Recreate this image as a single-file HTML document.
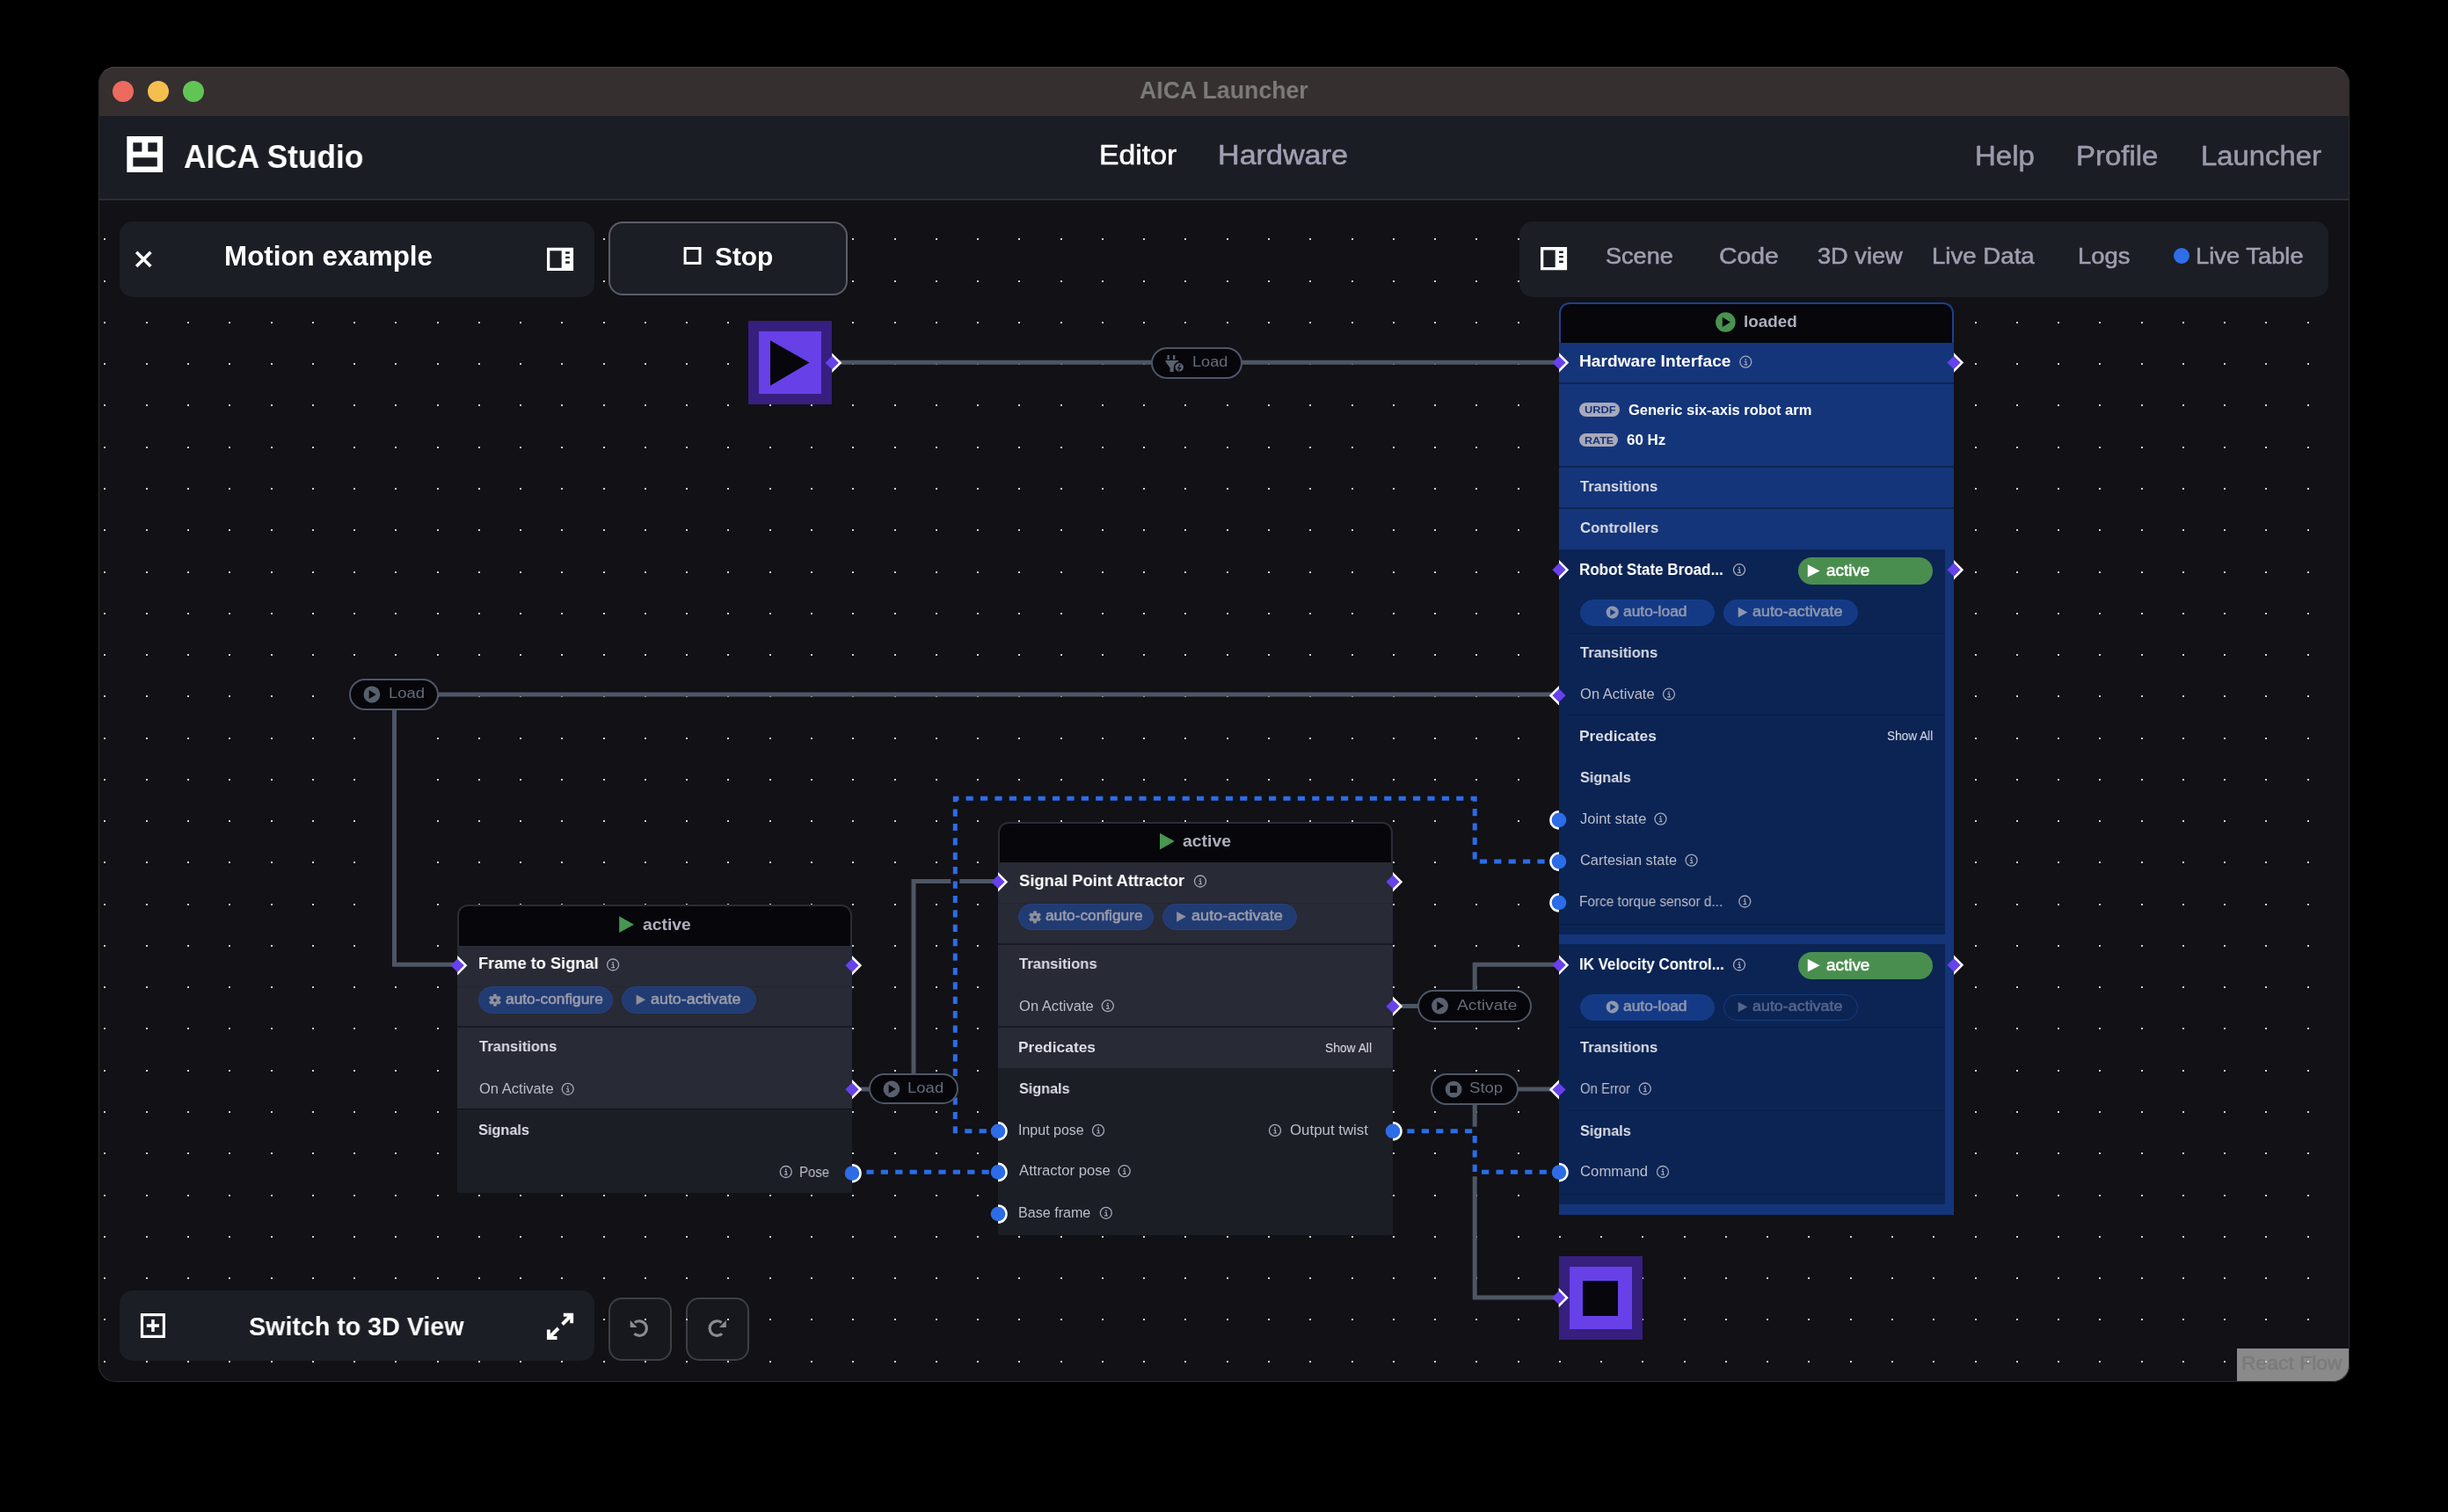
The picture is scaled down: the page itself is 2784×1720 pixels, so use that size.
<!DOCTYPE html>
<html><head><meta charset="utf-8"><style>
html,body{margin:0;padding:0;background:#000;width:2784px;height:1720px;overflow:hidden}
.a{position:absolute}
.t{position:absolute;white-space:nowrap;line-height:1;font-family:"Liberation Sans",sans-serif;transform-origin:0 0;will-change:transform}
svg.a{overflow:visible}
</style></head><body>
<div class="a" style="left:112px;top:76px;width:2560px;height:1496px;border-radius:19px;overflow:hidden;background:#111116;">
<div class="a" style="left:0;top:0;width:2560px;height:56px;background:#352f2f;border-top:1px solid #4a4444;box-sizing:border-box"></div>
<div class="a" style="left:0;top:56px;width:2560px;height:96px;background:#1b1d24;border-bottom:2px solid #2b2e37;box-sizing:border-box"></div>
</div>
<div class="a" style="left:128px;top:92px;width:24px;height:24px;border-radius:50%;background:#ed6a5e"></div>
<div class="a" style="left:168px;top:92px;width:24px;height:24px;border-radius:50%;background:#f4bf4f"></div>
<div class="a" style="left:208px;top:92px;width:24px;height:24px;border-radius:50%;background:#61c554"></div>
<div class="t" id="t0" style="left:1295.76px;top:88.00px;font-size:28.41px;font-weight:700;color:#7c7a7a;transform:scaleX(0.9389);">AICA Launcher</div>
<svg class="a" style="left:0;top:0" width="2784" height="1720" viewBox="0 0 2784 1720"><path fill="#fff" fill-rule="evenodd" d="M144.3 155.1H185.1V196H144.3Z M151.3 162.3V172.4H161.4V162.3Z M168.3 162.3V172.4H178.8V162.3Z M151.3 179.2V189.6H178.8V179.2Z"/></svg>
<div class="t" id="t1" style="left:209.44px;top:161.00px;font-size:36.81px;font-weight:700;color:#fff;transform:scaleX(0.9583);">AICA Studio</div>
<div class="t" id="t2" style="left:1250.10px;top:162.00px;font-size:30.72px;font-weight:400;color:#fff;transform:scaleX(1.0987);-webkit-text-stroke:0.55px #fff;">Editor</div>
<div class="t" id="t3" style="left:1385.38px;top:162.00px;font-size:30.72px;font-weight:400;color:#a09fb3;transform:scaleX(1.1108);-webkit-text-stroke:0.55px #a09fb3;">Hardware</div>
<div class="t" id="t4" style="left:2245.57px;top:162.00px;font-size:31.01px;font-weight:400;color:#9b9aac;transform:scaleX(1.0639);-webkit-text-stroke:0.55px #9b9aac;">Help</div>
<div class="t" id="t5" style="left:2361.47px;top:162.00px;font-size:31.01px;font-weight:400;color:#9b9aac;transform:scaleX(1.0635);-webkit-text-stroke:0.55px #9b9aac;">Profile</div>
<div class="t" id="t6" style="left:2502.78px;top:162.00px;font-size:31.01px;font-weight:400;color:#9b9aac;transform:scaleX(1.0591);-webkit-text-stroke:0.55px #9b9aac;">Launcher</div>
<div class="a" style="left:692px;top:1476px;width:71.5px;height:71.5px;box-sizing:border-box;border:2px solid #3d3e48;border-radius:15px;background:#17181e"></div>
<div class="a" style="left:780.2px;top:1476px;width:71.5px;height:71.5px;box-sizing:border-box;border:2px solid #3d3e48;border-radius:15px;background:#17181e"></div>
<div class="a" style="left:2544px;top:1534px;width:128px;height:38px;background:#8a8a8a;border-bottom-right-radius:19px"></div>
<div class="t" id="t7" style="left:2549.23px;top:1541.00px;font-size:21.45px;font-weight:400;color:#7b7b7b;transform:scaleX(1.0692);-webkit-text-stroke:0.55px #7b7b7b;">React Flow</div>
<svg class="a" style="left:0;top:0" width="2784" height="1720" shape-rendering="crispEdges"><path fill="#d0d0d0" d="M118 271h2v2h-2zM166 271h2v2h-2zM213 271h2v2h-2zM260 271h2v2h-2zM308 271h2v2h-2zM355 271h2v2h-2zM402 271h2v2h-2zM449 271h2v2h-2zM497 271h2v2h-2zM544 271h2v2h-2zM591 271h2v2h-2zM638 271h2v2h-2zM686 271h2v2h-2zM733 271h2v2h-2zM780 271h2v2h-2zM827 271h2v2h-2zM875 271h2v2h-2zM922 271h2v2h-2zM969 271h2v2h-2zM1017 271h2v2h-2zM1064 271h2v2h-2zM1111 271h2v2h-2zM1158 271h2v2h-2zM1206 271h2v2h-2zM1253 271h2v2h-2zM1300 271h2v2h-2zM1347 271h2v2h-2zM1395 271h2v2h-2zM1442 271h2v2h-2zM1489 271h2v2h-2zM1537 271h2v2h-2zM1584 271h2v2h-2zM1631 271h2v2h-2zM1678 271h2v2h-2zM1726 271h2v2h-2zM1773 271h2v2h-2zM1820 271h2v2h-2zM1867 271h2v2h-2zM1915 271h2v2h-2zM1962 271h2v2h-2zM2009 271h2v2h-2zM2056 271h2v2h-2zM2104 271h2v2h-2zM2151 271h2v2h-2zM2198 271h2v2h-2zM2246 271h2v2h-2zM2293 271h2v2h-2zM2340 271h2v2h-2zM2387 271h2v2h-2zM2435 271h2v2h-2zM2482 271h2v2h-2zM2529 271h2v2h-2zM2576 271h2v2h-2zM2624 271h2v2h-2zM2671 271h1v2h-1zM118 319h2v2h-2zM166 319h2v2h-2zM213 319h2v2h-2zM260 319h2v2h-2zM308 319h2v2h-2zM355 319h2v2h-2zM402 319h2v2h-2zM449 319h2v2h-2zM497 319h2v2h-2zM544 319h2v2h-2zM591 319h2v2h-2zM638 319h2v2h-2zM686 319h2v2h-2zM733 319h2v2h-2zM780 319h2v2h-2zM827 319h2v2h-2zM875 319h2v2h-2zM922 319h2v2h-2zM969 319h2v2h-2zM1017 319h2v2h-2zM1064 319h2v2h-2zM1111 319h2v2h-2zM1158 319h2v2h-2zM1206 319h2v2h-2zM1253 319h2v2h-2zM1300 319h2v2h-2zM1347 319h2v2h-2zM1395 319h2v2h-2zM1442 319h2v2h-2zM1489 319h2v2h-2zM1537 319h2v2h-2zM1584 319h2v2h-2zM1631 319h2v2h-2zM1678 319h2v2h-2zM1726 319h2v2h-2zM1773 319h2v2h-2zM1820 319h2v2h-2zM1867 319h2v2h-2zM1915 319h2v2h-2zM1962 319h2v2h-2zM2009 319h2v2h-2zM2056 319h2v2h-2zM2104 319h2v2h-2zM2151 319h2v2h-2zM2198 319h2v2h-2zM2246 319h2v2h-2zM2293 319h2v2h-2zM2340 319h2v2h-2zM2387 319h2v2h-2zM2435 319h2v2h-2zM2482 319h2v2h-2zM2529 319h2v2h-2zM2576 319h2v2h-2zM2624 319h2v2h-2zM2671 319h1v2h-1zM118 366h2v2h-2zM166 366h2v2h-2zM213 366h2v2h-2zM260 366h2v2h-2zM308 366h2v2h-2zM355 366h2v2h-2zM402 366h2v2h-2zM449 366h2v2h-2zM497 366h2v2h-2zM544 366h2v2h-2zM591 366h2v2h-2zM638 366h2v2h-2zM686 366h2v2h-2zM733 366h2v2h-2zM780 366h2v2h-2zM827 366h2v2h-2zM875 366h2v2h-2zM922 366h2v2h-2zM969 366h2v2h-2zM1017 366h2v2h-2zM1064 366h2v2h-2zM1111 366h2v2h-2zM1158 366h2v2h-2zM1206 366h2v2h-2zM1253 366h2v2h-2zM1300 366h2v2h-2zM1347 366h2v2h-2zM1395 366h2v2h-2zM1442 366h2v2h-2zM1489 366h2v2h-2zM1537 366h2v2h-2zM1584 366h2v2h-2zM1631 366h2v2h-2zM1678 366h2v2h-2zM1726 366h2v2h-2zM1773 366h2v2h-2zM1820 366h2v2h-2zM1867 366h2v2h-2zM1915 366h2v2h-2zM1962 366h2v2h-2zM2009 366h2v2h-2zM2056 366h2v2h-2zM2104 366h2v2h-2zM2151 366h2v2h-2zM2198 366h2v2h-2zM2246 366h2v2h-2zM2293 366h2v2h-2zM2340 366h2v2h-2zM2387 366h2v2h-2zM2435 366h2v2h-2zM2482 366h2v2h-2zM2529 366h2v2h-2zM2576 366h2v2h-2zM2624 366h2v2h-2zM2671 366h1v2h-1zM118 413h2v2h-2zM166 413h2v2h-2zM213 413h2v2h-2zM260 413h2v2h-2zM308 413h2v2h-2zM355 413h2v2h-2zM402 413h2v2h-2zM449 413h2v2h-2zM497 413h2v2h-2zM544 413h2v2h-2zM591 413h2v2h-2zM638 413h2v2h-2zM686 413h2v2h-2zM733 413h2v2h-2zM780 413h2v2h-2zM827 413h2v2h-2zM875 413h2v2h-2zM922 413h2v2h-2zM969 413h2v2h-2zM1017 413h2v2h-2zM1064 413h2v2h-2zM1111 413h2v2h-2zM1158 413h2v2h-2zM1206 413h2v2h-2zM1253 413h2v2h-2zM1300 413h2v2h-2zM1347 413h2v2h-2zM1395 413h2v2h-2zM1442 413h2v2h-2zM1489 413h2v2h-2zM1537 413h2v2h-2zM1584 413h2v2h-2zM1631 413h2v2h-2zM1678 413h2v2h-2zM1726 413h2v2h-2zM1773 413h2v2h-2zM1820 413h2v2h-2zM1867 413h2v2h-2zM1915 413h2v2h-2zM1962 413h2v2h-2zM2009 413h2v2h-2zM2056 413h2v2h-2zM2104 413h2v2h-2zM2151 413h2v2h-2zM2198 413h2v2h-2zM2246 413h2v2h-2zM2293 413h2v2h-2zM2340 413h2v2h-2zM2387 413h2v2h-2zM2435 413h2v2h-2zM2482 413h2v2h-2zM2529 413h2v2h-2zM2576 413h2v2h-2zM2624 413h2v2h-2zM2671 413h1v2h-1zM118 460h2v2h-2zM166 460h2v2h-2zM213 460h2v2h-2zM260 460h2v2h-2zM308 460h2v2h-2zM355 460h2v2h-2zM402 460h2v2h-2zM449 460h2v2h-2zM497 460h2v2h-2zM544 460h2v2h-2zM591 460h2v2h-2zM638 460h2v2h-2zM686 460h2v2h-2zM733 460h2v2h-2zM780 460h2v2h-2zM827 460h2v2h-2zM875 460h2v2h-2zM922 460h2v2h-2zM969 460h2v2h-2zM1017 460h2v2h-2zM1064 460h2v2h-2zM1111 460h2v2h-2zM1158 460h2v2h-2zM1206 460h2v2h-2zM1253 460h2v2h-2zM1300 460h2v2h-2zM1347 460h2v2h-2zM1395 460h2v2h-2zM1442 460h2v2h-2zM1489 460h2v2h-2zM1537 460h2v2h-2zM1584 460h2v2h-2zM1631 460h2v2h-2zM1678 460h2v2h-2zM1726 460h2v2h-2zM1773 460h2v2h-2zM1820 460h2v2h-2zM1867 460h2v2h-2zM1915 460h2v2h-2zM1962 460h2v2h-2zM2009 460h2v2h-2zM2056 460h2v2h-2zM2104 460h2v2h-2zM2151 460h2v2h-2zM2198 460h2v2h-2zM2246 460h2v2h-2zM2293 460h2v2h-2zM2340 460h2v2h-2zM2387 460h2v2h-2zM2435 460h2v2h-2zM2482 460h2v2h-2zM2529 460h2v2h-2zM2576 460h2v2h-2zM2624 460h2v2h-2zM2671 460h1v2h-1zM118 508h2v2h-2zM166 508h2v2h-2zM213 508h2v2h-2zM260 508h2v2h-2zM308 508h2v2h-2zM355 508h2v2h-2zM402 508h2v2h-2zM449 508h2v2h-2zM497 508h2v2h-2zM544 508h2v2h-2zM591 508h2v2h-2zM638 508h2v2h-2zM686 508h2v2h-2zM733 508h2v2h-2zM780 508h2v2h-2zM827 508h2v2h-2zM875 508h2v2h-2zM922 508h2v2h-2zM969 508h2v2h-2zM1017 508h2v2h-2zM1064 508h2v2h-2zM1111 508h2v2h-2zM1158 508h2v2h-2zM1206 508h2v2h-2zM1253 508h2v2h-2zM1300 508h2v2h-2zM1347 508h2v2h-2zM1395 508h2v2h-2zM1442 508h2v2h-2zM1489 508h2v2h-2zM1537 508h2v2h-2zM1584 508h2v2h-2zM1631 508h2v2h-2zM1678 508h2v2h-2zM1726 508h2v2h-2zM1773 508h2v2h-2zM1820 508h2v2h-2zM1867 508h2v2h-2zM1915 508h2v2h-2zM1962 508h2v2h-2zM2009 508h2v2h-2zM2056 508h2v2h-2zM2104 508h2v2h-2zM2151 508h2v2h-2zM2198 508h2v2h-2zM2246 508h2v2h-2zM2293 508h2v2h-2zM2340 508h2v2h-2zM2387 508h2v2h-2zM2435 508h2v2h-2zM2482 508h2v2h-2zM2529 508h2v2h-2zM2576 508h2v2h-2zM2624 508h2v2h-2zM2671 508h1v2h-1zM118 555h2v2h-2zM166 555h2v2h-2zM213 555h2v2h-2zM260 555h2v2h-2zM308 555h2v2h-2zM355 555h2v2h-2zM402 555h2v2h-2zM449 555h2v2h-2zM497 555h2v2h-2zM544 555h2v2h-2zM591 555h2v2h-2zM638 555h2v2h-2zM686 555h2v2h-2zM733 555h2v2h-2zM780 555h2v2h-2zM827 555h2v2h-2zM875 555h2v2h-2zM922 555h2v2h-2zM969 555h2v2h-2zM1017 555h2v2h-2zM1064 555h2v2h-2zM1111 555h2v2h-2zM1158 555h2v2h-2zM1206 555h2v2h-2zM1253 555h2v2h-2zM1300 555h2v2h-2zM1347 555h2v2h-2zM1395 555h2v2h-2zM1442 555h2v2h-2zM1489 555h2v2h-2zM1537 555h2v2h-2zM1584 555h2v2h-2zM1631 555h2v2h-2zM1678 555h2v2h-2zM1726 555h2v2h-2zM1773 555h2v2h-2zM1820 555h2v2h-2zM1867 555h2v2h-2zM1915 555h2v2h-2zM1962 555h2v2h-2zM2009 555h2v2h-2zM2056 555h2v2h-2zM2104 555h2v2h-2zM2151 555h2v2h-2zM2198 555h2v2h-2zM2246 555h2v2h-2zM2293 555h2v2h-2zM2340 555h2v2h-2zM2387 555h2v2h-2zM2435 555h2v2h-2zM2482 555h2v2h-2zM2529 555h2v2h-2zM2576 555h2v2h-2zM2624 555h2v2h-2zM2671 555h1v2h-1zM118 602h2v2h-2zM166 602h2v2h-2zM213 602h2v2h-2zM260 602h2v2h-2zM308 602h2v2h-2zM355 602h2v2h-2zM402 602h2v2h-2zM449 602h2v2h-2zM497 602h2v2h-2zM544 602h2v2h-2zM591 602h2v2h-2zM638 602h2v2h-2zM686 602h2v2h-2zM733 602h2v2h-2zM780 602h2v2h-2zM827 602h2v2h-2zM875 602h2v2h-2zM922 602h2v2h-2zM969 602h2v2h-2zM1017 602h2v2h-2zM1064 602h2v2h-2zM1111 602h2v2h-2zM1158 602h2v2h-2zM1206 602h2v2h-2zM1253 602h2v2h-2zM1300 602h2v2h-2zM1347 602h2v2h-2zM1395 602h2v2h-2zM1442 602h2v2h-2zM1489 602h2v2h-2zM1537 602h2v2h-2zM1584 602h2v2h-2zM1631 602h2v2h-2zM1678 602h2v2h-2zM1726 602h2v2h-2zM1773 602h2v2h-2zM1820 602h2v2h-2zM1867 602h2v2h-2zM1915 602h2v2h-2zM1962 602h2v2h-2zM2009 602h2v2h-2zM2056 602h2v2h-2zM2104 602h2v2h-2zM2151 602h2v2h-2zM2198 602h2v2h-2zM2246 602h2v2h-2zM2293 602h2v2h-2zM2340 602h2v2h-2zM2387 602h2v2h-2zM2435 602h2v2h-2zM2482 602h2v2h-2zM2529 602h2v2h-2zM2576 602h2v2h-2zM2624 602h2v2h-2zM2671 602h1v2h-1zM118 650h2v2h-2zM166 650h2v2h-2zM213 650h2v2h-2zM260 650h2v2h-2zM308 650h2v2h-2zM355 650h2v2h-2zM402 650h2v2h-2zM449 650h2v2h-2zM497 650h2v2h-2zM544 650h2v2h-2zM591 650h2v2h-2zM638 650h2v2h-2zM686 650h2v2h-2zM733 650h2v2h-2zM780 650h2v2h-2zM827 650h2v2h-2zM875 650h2v2h-2zM922 650h2v2h-2zM969 650h2v2h-2zM1017 650h2v2h-2zM1064 650h2v2h-2zM1111 650h2v2h-2zM1158 650h2v2h-2zM1206 650h2v2h-2zM1253 650h2v2h-2zM1300 650h2v2h-2zM1347 650h2v2h-2zM1395 650h2v2h-2zM1442 650h2v2h-2zM1489 650h2v2h-2zM1537 650h2v2h-2zM1584 650h2v2h-2zM1631 650h2v2h-2zM1678 650h2v2h-2zM1726 650h2v2h-2zM1773 650h2v2h-2zM1820 650h2v2h-2zM1867 650h2v2h-2zM1915 650h2v2h-2zM1962 650h2v2h-2zM2009 650h2v2h-2zM2056 650h2v2h-2zM2104 650h2v2h-2zM2151 650h2v2h-2zM2198 650h2v2h-2zM2246 650h2v2h-2zM2293 650h2v2h-2zM2340 650h2v2h-2zM2387 650h2v2h-2zM2435 650h2v2h-2zM2482 650h2v2h-2zM2529 650h2v2h-2zM2576 650h2v2h-2zM2624 650h2v2h-2zM2671 650h1v2h-1zM118 697h2v2h-2zM166 697h2v2h-2zM213 697h2v2h-2zM260 697h2v2h-2zM308 697h2v2h-2zM355 697h2v2h-2zM402 697h2v2h-2zM449 697h2v2h-2zM497 697h2v2h-2zM544 697h2v2h-2zM591 697h2v2h-2zM638 697h2v2h-2zM686 697h2v2h-2zM733 697h2v2h-2zM780 697h2v2h-2zM827 697h2v2h-2zM875 697h2v2h-2zM922 697h2v2h-2zM969 697h2v2h-2zM1017 697h2v2h-2zM1064 697h2v2h-2zM1111 697h2v2h-2zM1158 697h2v2h-2zM1206 697h2v2h-2zM1253 697h2v2h-2zM1300 697h2v2h-2zM1347 697h2v2h-2zM1395 697h2v2h-2zM1442 697h2v2h-2zM1489 697h2v2h-2zM1537 697h2v2h-2zM1584 697h2v2h-2zM1631 697h2v2h-2zM1678 697h2v2h-2zM1726 697h2v2h-2zM1773 697h2v2h-2zM1820 697h2v2h-2zM1867 697h2v2h-2zM1915 697h2v2h-2zM1962 697h2v2h-2zM2009 697h2v2h-2zM2056 697h2v2h-2zM2104 697h2v2h-2zM2151 697h2v2h-2zM2198 697h2v2h-2zM2246 697h2v2h-2zM2293 697h2v2h-2zM2340 697h2v2h-2zM2387 697h2v2h-2zM2435 697h2v2h-2zM2482 697h2v2h-2zM2529 697h2v2h-2zM2576 697h2v2h-2zM2624 697h2v2h-2zM2671 697h1v2h-1zM118 744h2v2h-2zM166 744h2v2h-2zM213 744h2v2h-2zM260 744h2v2h-2zM308 744h2v2h-2zM355 744h2v2h-2zM402 744h2v2h-2zM449 744h2v2h-2zM497 744h2v2h-2zM544 744h2v2h-2zM591 744h2v2h-2zM638 744h2v2h-2zM686 744h2v2h-2zM733 744h2v2h-2zM780 744h2v2h-2zM827 744h2v2h-2zM875 744h2v2h-2zM922 744h2v2h-2zM969 744h2v2h-2zM1017 744h2v2h-2zM1064 744h2v2h-2zM1111 744h2v2h-2zM1158 744h2v2h-2zM1206 744h2v2h-2zM1253 744h2v2h-2zM1300 744h2v2h-2zM1347 744h2v2h-2zM1395 744h2v2h-2zM1442 744h2v2h-2zM1489 744h2v2h-2zM1537 744h2v2h-2zM1584 744h2v2h-2zM1631 744h2v2h-2zM1678 744h2v2h-2zM1726 744h2v2h-2zM1773 744h2v2h-2zM1820 744h2v2h-2zM1867 744h2v2h-2zM1915 744h2v2h-2zM1962 744h2v2h-2zM2009 744h2v2h-2zM2056 744h2v2h-2zM2104 744h2v2h-2zM2151 744h2v2h-2zM2198 744h2v2h-2zM2246 744h2v2h-2zM2293 744h2v2h-2zM2340 744h2v2h-2zM2387 744h2v2h-2zM2435 744h2v2h-2zM2482 744h2v2h-2zM2529 744h2v2h-2zM2576 744h2v2h-2zM2624 744h2v2h-2zM2671 744h1v2h-1zM118 791h2v2h-2zM166 791h2v2h-2zM213 791h2v2h-2zM260 791h2v2h-2zM308 791h2v2h-2zM355 791h2v2h-2zM402 791h2v2h-2zM449 791h2v2h-2zM497 791h2v2h-2zM544 791h2v2h-2zM591 791h2v2h-2zM638 791h2v2h-2zM686 791h2v2h-2zM733 791h2v2h-2zM780 791h2v2h-2zM827 791h2v2h-2zM875 791h2v2h-2zM922 791h2v2h-2zM969 791h2v2h-2zM1017 791h2v2h-2zM1064 791h2v2h-2zM1111 791h2v2h-2zM1158 791h2v2h-2zM1206 791h2v2h-2zM1253 791h2v2h-2zM1300 791h2v2h-2zM1347 791h2v2h-2zM1395 791h2v2h-2zM1442 791h2v2h-2zM1489 791h2v2h-2zM1537 791h2v2h-2zM1584 791h2v2h-2zM1631 791h2v2h-2zM1678 791h2v2h-2zM1726 791h2v2h-2zM1773 791h2v2h-2zM1820 791h2v2h-2zM1867 791h2v2h-2zM1915 791h2v2h-2zM1962 791h2v2h-2zM2009 791h2v2h-2zM2056 791h2v2h-2zM2104 791h2v2h-2zM2151 791h2v2h-2zM2198 791h2v2h-2zM2246 791h2v2h-2zM2293 791h2v2h-2zM2340 791h2v2h-2zM2387 791h2v2h-2zM2435 791h2v2h-2zM2482 791h2v2h-2zM2529 791h2v2h-2zM2576 791h2v2h-2zM2624 791h2v2h-2zM2671 791h1v2h-1zM118 839h2v2h-2zM166 839h2v2h-2zM213 839h2v2h-2zM260 839h2v2h-2zM308 839h2v2h-2zM355 839h2v2h-2zM402 839h2v2h-2zM449 839h2v2h-2zM497 839h2v2h-2zM544 839h2v2h-2zM591 839h2v2h-2zM638 839h2v2h-2zM686 839h2v2h-2zM733 839h2v2h-2zM780 839h2v2h-2zM827 839h2v2h-2zM875 839h2v2h-2zM922 839h2v2h-2zM969 839h2v2h-2zM1017 839h2v2h-2zM1064 839h2v2h-2zM1111 839h2v2h-2zM1158 839h2v2h-2zM1206 839h2v2h-2zM1253 839h2v2h-2zM1300 839h2v2h-2zM1347 839h2v2h-2zM1395 839h2v2h-2zM1442 839h2v2h-2zM1489 839h2v2h-2zM1537 839h2v2h-2zM1584 839h2v2h-2zM1631 839h2v2h-2zM1678 839h2v2h-2zM1726 839h2v2h-2zM1773 839h2v2h-2zM1820 839h2v2h-2zM1867 839h2v2h-2zM1915 839h2v2h-2zM1962 839h2v2h-2zM2009 839h2v2h-2zM2056 839h2v2h-2zM2104 839h2v2h-2zM2151 839h2v2h-2zM2198 839h2v2h-2zM2246 839h2v2h-2zM2293 839h2v2h-2zM2340 839h2v2h-2zM2387 839h2v2h-2zM2435 839h2v2h-2zM2482 839h2v2h-2zM2529 839h2v2h-2zM2576 839h2v2h-2zM2624 839h2v2h-2zM2671 839h1v2h-1zM118 886h2v2h-2zM166 886h2v2h-2zM213 886h2v2h-2zM260 886h2v2h-2zM308 886h2v2h-2zM355 886h2v2h-2zM402 886h2v2h-2zM449 886h2v2h-2zM497 886h2v2h-2zM544 886h2v2h-2zM591 886h2v2h-2zM638 886h2v2h-2zM686 886h2v2h-2zM733 886h2v2h-2zM780 886h2v2h-2zM827 886h2v2h-2zM875 886h2v2h-2zM922 886h2v2h-2zM969 886h2v2h-2zM1017 886h2v2h-2zM1064 886h2v2h-2zM1111 886h2v2h-2zM1158 886h2v2h-2zM1206 886h2v2h-2zM1253 886h2v2h-2zM1300 886h2v2h-2zM1347 886h2v2h-2zM1395 886h2v2h-2zM1442 886h2v2h-2zM1489 886h2v2h-2zM1537 886h2v2h-2zM1584 886h2v2h-2zM1631 886h2v2h-2zM1678 886h2v2h-2zM1726 886h2v2h-2zM1773 886h2v2h-2zM1820 886h2v2h-2zM1867 886h2v2h-2zM1915 886h2v2h-2zM1962 886h2v2h-2zM2009 886h2v2h-2zM2056 886h2v2h-2zM2104 886h2v2h-2zM2151 886h2v2h-2zM2198 886h2v2h-2zM2246 886h2v2h-2zM2293 886h2v2h-2zM2340 886h2v2h-2zM2387 886h2v2h-2zM2435 886h2v2h-2zM2482 886h2v2h-2zM2529 886h2v2h-2zM2576 886h2v2h-2zM2624 886h2v2h-2zM2671 886h1v2h-1zM118 933h2v2h-2zM166 933h2v2h-2zM213 933h2v2h-2zM260 933h2v2h-2zM308 933h2v2h-2zM355 933h2v2h-2zM402 933h2v2h-2zM449 933h2v2h-2zM497 933h2v2h-2zM544 933h2v2h-2zM591 933h2v2h-2zM638 933h2v2h-2zM686 933h2v2h-2zM733 933h2v2h-2zM780 933h2v2h-2zM827 933h2v2h-2zM875 933h2v2h-2zM922 933h2v2h-2zM969 933h2v2h-2zM1017 933h2v2h-2zM1064 933h2v2h-2zM1111 933h2v2h-2zM1158 933h2v2h-2zM1206 933h2v2h-2zM1253 933h2v2h-2zM1300 933h2v2h-2zM1347 933h2v2h-2zM1395 933h2v2h-2zM1442 933h2v2h-2zM1489 933h2v2h-2zM1537 933h2v2h-2zM1584 933h2v2h-2zM1631 933h2v2h-2zM1678 933h2v2h-2zM1726 933h2v2h-2zM1773 933h2v2h-2zM1820 933h2v2h-2zM1867 933h2v2h-2zM1915 933h2v2h-2zM1962 933h2v2h-2zM2009 933h2v2h-2zM2056 933h2v2h-2zM2104 933h2v2h-2zM2151 933h2v2h-2zM2198 933h2v2h-2zM2246 933h2v2h-2zM2293 933h2v2h-2zM2340 933h2v2h-2zM2387 933h2v2h-2zM2435 933h2v2h-2zM2482 933h2v2h-2zM2529 933h2v2h-2zM2576 933h2v2h-2zM2624 933h2v2h-2zM2671 933h1v2h-1zM118 980h2v2h-2zM166 980h2v2h-2zM213 980h2v2h-2zM260 980h2v2h-2zM308 980h2v2h-2zM355 980h2v2h-2zM402 980h2v2h-2zM449 980h2v2h-2zM497 980h2v2h-2zM544 980h2v2h-2zM591 980h2v2h-2zM638 980h2v2h-2zM686 980h2v2h-2zM733 980h2v2h-2zM780 980h2v2h-2zM827 980h2v2h-2zM875 980h2v2h-2zM922 980h2v2h-2zM969 980h2v2h-2zM1017 980h2v2h-2zM1064 980h2v2h-2zM1111 980h2v2h-2zM1158 980h2v2h-2zM1206 980h2v2h-2zM1253 980h2v2h-2zM1300 980h2v2h-2zM1347 980h2v2h-2zM1395 980h2v2h-2zM1442 980h2v2h-2zM1489 980h2v2h-2zM1537 980h2v2h-2zM1584 980h2v2h-2zM1631 980h2v2h-2zM1678 980h2v2h-2zM1726 980h2v2h-2zM1773 980h2v2h-2zM1820 980h2v2h-2zM1867 980h2v2h-2zM1915 980h2v2h-2zM1962 980h2v2h-2zM2009 980h2v2h-2zM2056 980h2v2h-2zM2104 980h2v2h-2zM2151 980h2v2h-2zM2198 980h2v2h-2zM2246 980h2v2h-2zM2293 980h2v2h-2zM2340 980h2v2h-2zM2387 980h2v2h-2zM2435 980h2v2h-2zM2482 980h2v2h-2zM2529 980h2v2h-2zM2576 980h2v2h-2zM2624 980h2v2h-2zM2671 980h1v2h-1zM118 1028h2v2h-2zM166 1028h2v2h-2zM213 1028h2v2h-2zM260 1028h2v2h-2zM308 1028h2v2h-2zM355 1028h2v2h-2zM402 1028h2v2h-2zM449 1028h2v2h-2zM497 1028h2v2h-2zM544 1028h2v2h-2zM591 1028h2v2h-2zM638 1028h2v2h-2zM686 1028h2v2h-2zM733 1028h2v2h-2zM780 1028h2v2h-2zM827 1028h2v2h-2zM875 1028h2v2h-2zM922 1028h2v2h-2zM969 1028h2v2h-2zM1017 1028h2v2h-2zM1064 1028h2v2h-2zM1111 1028h2v2h-2zM1158 1028h2v2h-2zM1206 1028h2v2h-2zM1253 1028h2v2h-2zM1300 1028h2v2h-2zM1347 1028h2v2h-2zM1395 1028h2v2h-2zM1442 1028h2v2h-2zM1489 1028h2v2h-2zM1537 1028h2v2h-2zM1584 1028h2v2h-2zM1631 1028h2v2h-2zM1678 1028h2v2h-2zM1726 1028h2v2h-2zM1773 1028h2v2h-2zM1820 1028h2v2h-2zM1867 1028h2v2h-2zM1915 1028h2v2h-2zM1962 1028h2v2h-2zM2009 1028h2v2h-2zM2056 1028h2v2h-2zM2104 1028h2v2h-2zM2151 1028h2v2h-2zM2198 1028h2v2h-2zM2246 1028h2v2h-2zM2293 1028h2v2h-2zM2340 1028h2v2h-2zM2387 1028h2v2h-2zM2435 1028h2v2h-2zM2482 1028h2v2h-2zM2529 1028h2v2h-2zM2576 1028h2v2h-2zM2624 1028h2v2h-2zM2671 1028h1v2h-1zM118 1075h2v2h-2zM166 1075h2v2h-2zM213 1075h2v2h-2zM260 1075h2v2h-2zM308 1075h2v2h-2zM355 1075h2v2h-2zM402 1075h2v2h-2zM449 1075h2v2h-2zM497 1075h2v2h-2zM544 1075h2v2h-2zM591 1075h2v2h-2zM638 1075h2v2h-2zM686 1075h2v2h-2zM733 1075h2v2h-2zM780 1075h2v2h-2zM827 1075h2v2h-2zM875 1075h2v2h-2zM922 1075h2v2h-2zM969 1075h2v2h-2zM1017 1075h2v2h-2zM1064 1075h2v2h-2zM1111 1075h2v2h-2zM1158 1075h2v2h-2zM1206 1075h2v2h-2zM1253 1075h2v2h-2zM1300 1075h2v2h-2zM1347 1075h2v2h-2zM1395 1075h2v2h-2zM1442 1075h2v2h-2zM1489 1075h2v2h-2zM1537 1075h2v2h-2zM1584 1075h2v2h-2zM1631 1075h2v2h-2zM1678 1075h2v2h-2zM1726 1075h2v2h-2zM1773 1075h2v2h-2zM1820 1075h2v2h-2zM1867 1075h2v2h-2zM1915 1075h2v2h-2zM1962 1075h2v2h-2zM2009 1075h2v2h-2zM2056 1075h2v2h-2zM2104 1075h2v2h-2zM2151 1075h2v2h-2zM2198 1075h2v2h-2zM2246 1075h2v2h-2zM2293 1075h2v2h-2zM2340 1075h2v2h-2zM2387 1075h2v2h-2zM2435 1075h2v2h-2zM2482 1075h2v2h-2zM2529 1075h2v2h-2zM2576 1075h2v2h-2zM2624 1075h2v2h-2zM2671 1075h1v2h-1zM118 1122h2v2h-2zM166 1122h2v2h-2zM213 1122h2v2h-2zM260 1122h2v2h-2zM308 1122h2v2h-2zM355 1122h2v2h-2zM402 1122h2v2h-2zM449 1122h2v2h-2zM497 1122h2v2h-2zM544 1122h2v2h-2zM591 1122h2v2h-2zM638 1122h2v2h-2zM686 1122h2v2h-2zM733 1122h2v2h-2zM780 1122h2v2h-2zM827 1122h2v2h-2zM875 1122h2v2h-2zM922 1122h2v2h-2zM969 1122h2v2h-2zM1017 1122h2v2h-2zM1064 1122h2v2h-2zM1111 1122h2v2h-2zM1158 1122h2v2h-2zM1206 1122h2v2h-2zM1253 1122h2v2h-2zM1300 1122h2v2h-2zM1347 1122h2v2h-2zM1395 1122h2v2h-2zM1442 1122h2v2h-2zM1489 1122h2v2h-2zM1537 1122h2v2h-2zM1584 1122h2v2h-2zM1631 1122h2v2h-2zM1678 1122h2v2h-2zM1726 1122h2v2h-2zM1773 1122h2v2h-2zM1820 1122h2v2h-2zM1867 1122h2v2h-2zM1915 1122h2v2h-2zM1962 1122h2v2h-2zM2009 1122h2v2h-2zM2056 1122h2v2h-2zM2104 1122h2v2h-2zM2151 1122h2v2h-2zM2198 1122h2v2h-2zM2246 1122h2v2h-2zM2293 1122h2v2h-2zM2340 1122h2v2h-2zM2387 1122h2v2h-2zM2435 1122h2v2h-2zM2482 1122h2v2h-2zM2529 1122h2v2h-2zM2576 1122h2v2h-2zM2624 1122h2v2h-2zM2671 1122h1v2h-1zM118 1169h2v2h-2zM166 1169h2v2h-2zM213 1169h2v2h-2zM260 1169h2v2h-2zM308 1169h2v2h-2zM355 1169h2v2h-2zM402 1169h2v2h-2zM449 1169h2v2h-2zM497 1169h2v2h-2zM544 1169h2v2h-2zM591 1169h2v2h-2zM638 1169h2v2h-2zM686 1169h2v2h-2zM733 1169h2v2h-2zM780 1169h2v2h-2zM827 1169h2v2h-2zM875 1169h2v2h-2zM922 1169h2v2h-2zM969 1169h2v2h-2zM1017 1169h2v2h-2zM1064 1169h2v2h-2zM1111 1169h2v2h-2zM1158 1169h2v2h-2zM1206 1169h2v2h-2zM1253 1169h2v2h-2zM1300 1169h2v2h-2zM1347 1169h2v2h-2zM1395 1169h2v2h-2zM1442 1169h2v2h-2zM1489 1169h2v2h-2zM1537 1169h2v2h-2zM1584 1169h2v2h-2zM1631 1169h2v2h-2zM1678 1169h2v2h-2zM1726 1169h2v2h-2zM1773 1169h2v2h-2zM1820 1169h2v2h-2zM1867 1169h2v2h-2zM1915 1169h2v2h-2zM1962 1169h2v2h-2zM2009 1169h2v2h-2zM2056 1169h2v2h-2zM2104 1169h2v2h-2zM2151 1169h2v2h-2zM2198 1169h2v2h-2zM2246 1169h2v2h-2zM2293 1169h2v2h-2zM2340 1169h2v2h-2zM2387 1169h2v2h-2zM2435 1169h2v2h-2zM2482 1169h2v2h-2zM2529 1169h2v2h-2zM2576 1169h2v2h-2zM2624 1169h2v2h-2zM2671 1169h1v2h-1zM118 1217h2v2h-2zM166 1217h2v2h-2zM213 1217h2v2h-2zM260 1217h2v2h-2zM308 1217h2v2h-2zM355 1217h2v2h-2zM402 1217h2v2h-2zM449 1217h2v2h-2zM497 1217h2v2h-2zM544 1217h2v2h-2zM591 1217h2v2h-2zM638 1217h2v2h-2zM686 1217h2v2h-2zM733 1217h2v2h-2zM780 1217h2v2h-2zM827 1217h2v2h-2zM875 1217h2v2h-2zM922 1217h2v2h-2zM969 1217h2v2h-2zM1017 1217h2v2h-2zM1064 1217h2v2h-2zM1111 1217h2v2h-2zM1158 1217h2v2h-2zM1206 1217h2v2h-2zM1253 1217h2v2h-2zM1300 1217h2v2h-2zM1347 1217h2v2h-2zM1395 1217h2v2h-2zM1442 1217h2v2h-2zM1489 1217h2v2h-2zM1537 1217h2v2h-2zM1584 1217h2v2h-2zM1631 1217h2v2h-2zM1678 1217h2v2h-2zM1726 1217h2v2h-2zM1773 1217h2v2h-2zM1820 1217h2v2h-2zM1867 1217h2v2h-2zM1915 1217h2v2h-2zM1962 1217h2v2h-2zM2009 1217h2v2h-2zM2056 1217h2v2h-2zM2104 1217h2v2h-2zM2151 1217h2v2h-2zM2198 1217h2v2h-2zM2246 1217h2v2h-2zM2293 1217h2v2h-2zM2340 1217h2v2h-2zM2387 1217h2v2h-2zM2435 1217h2v2h-2zM2482 1217h2v2h-2zM2529 1217h2v2h-2zM2576 1217h2v2h-2zM2624 1217h2v2h-2zM2671 1217h1v2h-1zM118 1264h2v2h-2zM166 1264h2v2h-2zM213 1264h2v2h-2zM260 1264h2v2h-2zM308 1264h2v2h-2zM355 1264h2v2h-2zM402 1264h2v2h-2zM449 1264h2v2h-2zM497 1264h2v2h-2zM544 1264h2v2h-2zM591 1264h2v2h-2zM638 1264h2v2h-2zM686 1264h2v2h-2zM733 1264h2v2h-2zM780 1264h2v2h-2zM827 1264h2v2h-2zM875 1264h2v2h-2zM922 1264h2v2h-2zM969 1264h2v2h-2zM1017 1264h2v2h-2zM1064 1264h2v2h-2zM1111 1264h2v2h-2zM1158 1264h2v2h-2zM1206 1264h2v2h-2zM1253 1264h2v2h-2zM1300 1264h2v2h-2zM1347 1264h2v2h-2zM1395 1264h2v2h-2zM1442 1264h2v2h-2zM1489 1264h2v2h-2zM1537 1264h2v2h-2zM1584 1264h2v2h-2zM1631 1264h2v2h-2zM1678 1264h2v2h-2zM1726 1264h2v2h-2zM1773 1264h2v2h-2zM1820 1264h2v2h-2zM1867 1264h2v2h-2zM1915 1264h2v2h-2zM1962 1264h2v2h-2zM2009 1264h2v2h-2zM2056 1264h2v2h-2zM2104 1264h2v2h-2zM2151 1264h2v2h-2zM2198 1264h2v2h-2zM2246 1264h2v2h-2zM2293 1264h2v2h-2zM2340 1264h2v2h-2zM2387 1264h2v2h-2zM2435 1264h2v2h-2zM2482 1264h2v2h-2zM2529 1264h2v2h-2zM2576 1264h2v2h-2zM2624 1264h2v2h-2zM2671 1264h1v2h-1zM118 1311h2v2h-2zM166 1311h2v2h-2zM213 1311h2v2h-2zM260 1311h2v2h-2zM308 1311h2v2h-2zM355 1311h2v2h-2zM402 1311h2v2h-2zM449 1311h2v2h-2zM497 1311h2v2h-2zM544 1311h2v2h-2zM591 1311h2v2h-2zM638 1311h2v2h-2zM686 1311h2v2h-2zM733 1311h2v2h-2zM780 1311h2v2h-2zM827 1311h2v2h-2zM875 1311h2v2h-2zM922 1311h2v2h-2zM969 1311h2v2h-2zM1017 1311h2v2h-2zM1064 1311h2v2h-2zM1111 1311h2v2h-2zM1158 1311h2v2h-2zM1206 1311h2v2h-2zM1253 1311h2v2h-2zM1300 1311h2v2h-2zM1347 1311h2v2h-2zM1395 1311h2v2h-2zM1442 1311h2v2h-2zM1489 1311h2v2h-2zM1537 1311h2v2h-2zM1584 1311h2v2h-2zM1631 1311h2v2h-2zM1678 1311h2v2h-2zM1726 1311h2v2h-2zM1773 1311h2v2h-2zM1820 1311h2v2h-2zM1867 1311h2v2h-2zM1915 1311h2v2h-2zM1962 1311h2v2h-2zM2009 1311h2v2h-2zM2056 1311h2v2h-2zM2104 1311h2v2h-2zM2151 1311h2v2h-2zM2198 1311h2v2h-2zM2246 1311h2v2h-2zM2293 1311h2v2h-2zM2340 1311h2v2h-2zM2387 1311h2v2h-2zM2435 1311h2v2h-2zM2482 1311h2v2h-2zM2529 1311h2v2h-2zM2576 1311h2v2h-2zM2624 1311h2v2h-2zM2671 1311h1v2h-1zM118 1359h2v2h-2zM166 1359h2v2h-2zM213 1359h2v2h-2zM260 1359h2v2h-2zM308 1359h2v2h-2zM355 1359h2v2h-2zM402 1359h2v2h-2zM449 1359h2v2h-2zM497 1359h2v2h-2zM544 1359h2v2h-2zM591 1359h2v2h-2zM638 1359h2v2h-2zM686 1359h2v2h-2zM733 1359h2v2h-2zM780 1359h2v2h-2zM827 1359h2v2h-2zM875 1359h2v2h-2zM922 1359h2v2h-2zM969 1359h2v2h-2zM1017 1359h2v2h-2zM1064 1359h2v2h-2zM1111 1359h2v2h-2zM1158 1359h2v2h-2zM1206 1359h2v2h-2zM1253 1359h2v2h-2zM1300 1359h2v2h-2zM1347 1359h2v2h-2zM1395 1359h2v2h-2zM1442 1359h2v2h-2zM1489 1359h2v2h-2zM1537 1359h2v2h-2zM1584 1359h2v2h-2zM1631 1359h2v2h-2zM1678 1359h2v2h-2zM1726 1359h2v2h-2zM1773 1359h2v2h-2zM1820 1359h2v2h-2zM1867 1359h2v2h-2zM1915 1359h2v2h-2zM1962 1359h2v2h-2zM2009 1359h2v2h-2zM2056 1359h2v2h-2zM2104 1359h2v2h-2zM2151 1359h2v2h-2zM2198 1359h2v2h-2zM2246 1359h2v2h-2zM2293 1359h2v2h-2zM2340 1359h2v2h-2zM2387 1359h2v2h-2zM2435 1359h2v2h-2zM2482 1359h2v2h-2zM2529 1359h2v2h-2zM2576 1359h2v2h-2zM2624 1359h2v2h-2zM2671 1359h1v2h-1zM118 1406h2v2h-2zM166 1406h2v2h-2zM213 1406h2v2h-2zM260 1406h2v2h-2zM308 1406h2v2h-2zM355 1406h2v2h-2zM402 1406h2v2h-2zM449 1406h2v2h-2zM497 1406h2v2h-2zM544 1406h2v2h-2zM591 1406h2v2h-2zM638 1406h2v2h-2zM686 1406h2v2h-2zM733 1406h2v2h-2zM780 1406h2v2h-2zM827 1406h2v2h-2zM875 1406h2v2h-2zM922 1406h2v2h-2zM969 1406h2v2h-2zM1017 1406h2v2h-2zM1064 1406h2v2h-2zM1111 1406h2v2h-2zM1158 1406h2v2h-2zM1206 1406h2v2h-2zM1253 1406h2v2h-2zM1300 1406h2v2h-2zM1347 1406h2v2h-2zM1395 1406h2v2h-2zM1442 1406h2v2h-2zM1489 1406h2v2h-2zM1537 1406h2v2h-2zM1584 1406h2v2h-2zM1631 1406h2v2h-2zM1678 1406h2v2h-2zM1726 1406h2v2h-2zM1773 1406h2v2h-2zM1820 1406h2v2h-2zM1867 1406h2v2h-2zM1915 1406h2v2h-2zM1962 1406h2v2h-2zM2009 1406h2v2h-2zM2056 1406h2v2h-2zM2104 1406h2v2h-2zM2151 1406h2v2h-2zM2198 1406h2v2h-2zM2246 1406h2v2h-2zM2293 1406h2v2h-2zM2340 1406h2v2h-2zM2387 1406h2v2h-2zM2435 1406h2v2h-2zM2482 1406h2v2h-2zM2529 1406h2v2h-2zM2576 1406h2v2h-2zM2624 1406h2v2h-2zM2671 1406h1v2h-1zM118 1453h2v2h-2zM166 1453h2v2h-2zM213 1453h2v2h-2zM260 1453h2v2h-2zM308 1453h2v2h-2zM355 1453h2v2h-2zM402 1453h2v2h-2zM449 1453h2v2h-2zM497 1453h2v2h-2zM544 1453h2v2h-2zM591 1453h2v2h-2zM638 1453h2v2h-2zM686 1453h2v2h-2zM733 1453h2v2h-2zM780 1453h2v2h-2zM827 1453h2v2h-2zM875 1453h2v2h-2zM922 1453h2v2h-2zM969 1453h2v2h-2zM1017 1453h2v2h-2zM1064 1453h2v2h-2zM1111 1453h2v2h-2zM1158 1453h2v2h-2zM1206 1453h2v2h-2zM1253 1453h2v2h-2zM1300 1453h2v2h-2zM1347 1453h2v2h-2zM1395 1453h2v2h-2zM1442 1453h2v2h-2zM1489 1453h2v2h-2zM1537 1453h2v2h-2zM1584 1453h2v2h-2zM1631 1453h2v2h-2zM1678 1453h2v2h-2zM1726 1453h2v2h-2zM1773 1453h2v2h-2zM1820 1453h2v2h-2zM1867 1453h2v2h-2zM1915 1453h2v2h-2zM1962 1453h2v2h-2zM2009 1453h2v2h-2zM2056 1453h2v2h-2zM2104 1453h2v2h-2zM2151 1453h2v2h-2zM2198 1453h2v2h-2zM2246 1453h2v2h-2zM2293 1453h2v2h-2zM2340 1453h2v2h-2zM2387 1453h2v2h-2zM2435 1453h2v2h-2zM2482 1453h2v2h-2zM2529 1453h2v2h-2zM2576 1453h2v2h-2zM2624 1453h2v2h-2zM2671 1453h1v2h-1zM118 1500h2v2h-2zM166 1500h2v2h-2zM213 1500h2v2h-2zM260 1500h2v2h-2zM308 1500h2v2h-2zM355 1500h2v2h-2zM402 1500h2v2h-2zM449 1500h2v2h-2zM497 1500h2v2h-2zM544 1500h2v2h-2zM591 1500h2v2h-2zM638 1500h2v2h-2zM686 1500h2v2h-2zM733 1500h2v2h-2zM780 1500h2v2h-2zM827 1500h2v2h-2zM875 1500h2v2h-2zM922 1500h2v2h-2zM969 1500h2v2h-2zM1017 1500h2v2h-2zM1064 1500h2v2h-2zM1111 1500h2v2h-2zM1158 1500h2v2h-2zM1206 1500h2v2h-2zM1253 1500h2v2h-2zM1300 1500h2v2h-2zM1347 1500h2v2h-2zM1395 1500h2v2h-2zM1442 1500h2v2h-2zM1489 1500h2v2h-2zM1537 1500h2v2h-2zM1584 1500h2v2h-2zM1631 1500h2v2h-2zM1678 1500h2v2h-2zM1726 1500h2v2h-2zM1773 1500h2v2h-2zM1820 1500h2v2h-2zM1867 1500h2v2h-2zM1915 1500h2v2h-2zM1962 1500h2v2h-2zM2009 1500h2v2h-2zM2056 1500h2v2h-2zM2104 1500h2v2h-2zM2151 1500h2v2h-2zM2198 1500h2v2h-2zM2246 1500h2v2h-2zM2293 1500h2v2h-2zM2340 1500h2v2h-2zM2387 1500h2v2h-2zM2435 1500h2v2h-2zM2482 1500h2v2h-2zM2529 1500h2v2h-2zM2576 1500h2v2h-2zM2624 1500h2v2h-2zM2671 1500h1v2h-1zM118 1548h2v2h-2zM166 1548h2v2h-2zM213 1548h2v2h-2zM260 1548h2v2h-2zM308 1548h2v2h-2zM355 1548h2v2h-2zM402 1548h2v2h-2zM449 1548h2v2h-2zM497 1548h2v2h-2zM544 1548h2v2h-2zM591 1548h2v2h-2zM638 1548h2v2h-2zM686 1548h2v2h-2zM733 1548h2v2h-2zM780 1548h2v2h-2zM827 1548h2v2h-2zM875 1548h2v2h-2zM922 1548h2v2h-2zM969 1548h2v2h-2zM1017 1548h2v2h-2zM1064 1548h2v2h-2zM1111 1548h2v2h-2zM1158 1548h2v2h-2zM1206 1548h2v2h-2zM1253 1548h2v2h-2zM1300 1548h2v2h-2zM1347 1548h2v2h-2zM1395 1548h2v2h-2zM1442 1548h2v2h-2zM1489 1548h2v2h-2zM1537 1548h2v2h-2zM1584 1548h2v2h-2zM1631 1548h2v2h-2zM1678 1548h2v2h-2zM1726 1548h2v2h-2zM1773 1548h2v2h-2zM1820 1548h2v2h-2zM1867 1548h2v2h-2zM1915 1548h2v2h-2zM1962 1548h2v2h-2zM2009 1548h2v2h-2zM2056 1548h2v2h-2zM2104 1548h2v2h-2zM2151 1548h2v2h-2zM2198 1548h2v2h-2zM2246 1548h2v2h-2zM2293 1548h2v2h-2zM2340 1548h2v2h-2zM2387 1548h2v2h-2zM2435 1548h2v2h-2zM2482 1548h2v2h-2zM2529 1548h2v2h-2zM2576 1548h2v2h-2zM2624 1548h2v2h-2zM2671 1548h1v2h-1z"/></svg>
<svg class="a" style="left:0;top:0" width="2784" height="1720"><path d="M946 412.2H1773" fill="none" stroke="#4e5665" stroke-width="5" stroke-linejoin="miter" stroke-linecap="butt"/><path d="M499 790H1771" fill="none" stroke="#4e5665" stroke-width="5" stroke-linejoin="miter" stroke-linecap="butt"/><path d="M448.5 808V1097.3H520" fill="none" stroke="#4e5665" stroke-width="5" stroke-linejoin="miter" stroke-linecap="butt"/><path d="M969 1239H1039 V1002.6H1135" fill="none" stroke="#4e5665" stroke-width="5" stroke-linejoin="miter" stroke-linecap="butt"/><path d="M1584 1144.5H1677.2V1097.3H1773" fill="none" stroke="#4e5665" stroke-width="5" stroke-linejoin="miter" stroke-linecap="butt"/><path d="M1771 1239H1677.2V1476H1773" fill="none" stroke="#4e5665" stroke-width="5" stroke-linejoin="miter" stroke-linecap="butt"/><path d="M969 1333.3H1135" fill="none" stroke="#111116" stroke-width="10"/><path d="M969 1333.3H1135" fill="none" stroke="#2c6ce6" stroke-width="5" stroke-dasharray="8.2 8.2" stroke-dashoffset="0"/><path d="M1773 980H1677.2V908.2H1086.3V1286.8H1135" fill="none" stroke="#111116" stroke-width="10"/><path d="M1773 980H1677.2V908.2H1086.3V1286.8H1135" fill="none" stroke="#2c6ce6" stroke-width="5" stroke-dasharray="8.2 8.2" stroke-dashoffset="0"/><path d="M1584 1286.8H1677.2V1333.3H1773" fill="none" stroke="#111116" stroke-width="10"/><path d="M1584 1286.8H1677.2V1333.3H1773" fill="none" stroke="#2c6ce6" stroke-width="5" stroke-dasharray="8.2 8.2" stroke-dashoffset="0"/></svg>
<div class="a" style="left:1309px;top:395px;width:104px;height:36.30000000000001px;box-sizing:border-box;border:2px solid #4e5665;border-radius:20px;background:#06060b"></div>
<svg class="a" style="left:0;top:0" width="2784" height="1720"><g fill="#5a6170"><rect x="1327.5" y="404" width="2.3" height="5"/><rect x="1334" y="404" width="2.3" height="5"/><path d="M1325 410H1340.3L1339 413L1334.7 418.5V423H1330.6V418.5L1326.5 413Z"/><circle cx="1341.2" cy="417.8" r="5.6" stroke="#06060b" stroke-width="1.6"/></g><path d="M1342.4 414.3L1339.6 418.6H1342.6L1340.2 421.5" stroke="#06060b" stroke-width="1.1" fill="none"/></svg>
<div class="t" id="t8" style="left:1355.84px;top:404.00px;font-size:15.60px;font-weight:400;color:#656c79;transform:scaleX(1.1636);">Load</div>
<div class="a" style="left:397px;top:772px;width:102px;height:36px;box-sizing:border-box;border:2px solid #4e5665;border-radius:20px;background:#06060b"></div>
<svg class="a" style="left:0;top:0" width="2784" height="1720"><circle cx="422.9" cy="790.0" r="9.4" fill="#585f6d"/><path d="M419.7 785.0L427.7 790.0L419.7 795.0Z" fill="#06060b"/></svg>
<div class="t" id="t9" style="left:441.82px;top:781.00px;font-size:15.60px;font-weight:400;color:#656c79;transform:scaleX(1.1818);">Load</div>
<div class="a" style="left:988.4px;top:1221.4px;width:101.19999999999993px;height:34.899999999999864px;box-sizing:border-box;border:2px solid #4e5665;border-radius:20px;background:#06060b"></div>
<svg class="a" style="left:0;top:0" width="2784" height="1720"><circle cx="1013.9" cy="1238.85" r="9.4" fill="#585f6d"/><path d="M1010.6999999999999 1233.85L1018.6999999999999 1238.85L1010.6999999999999 1243.85Z" fill="#06060b"/></svg>
<div class="t" id="t10" style="left:1032.11px;top:1230.00px;font-size:15.60px;font-weight:400;color:#656c79;transform:scaleX(1.1879);">Load</div>
<div class="a" style="left:1612px;top:1126px;width:130.20000000000005px;height:36.5px;box-sizing:border-box;border:2px solid #4e5665;border-radius:20px;background:#06060b"></div>
<svg class="a" style="left:0;top:0" width="2784" height="1720"><circle cx="1637.5" cy="1144.25" r="9.4" fill="#585f6d"/><path d="M1634.3 1139.25L1642.3 1144.25L1634.3 1149.25Z" fill="#06060b"/></svg>
<div class="t" id="t11" style="left:1657.30px;top:1136.00px;font-size:15.60px;font-weight:400;color:#656c79;transform:scaleX(1.2327);">Activate</div>
<div class="a" style="left:1627.3px;top:1221.4px;width:99.40000000000009px;height:35.299999999999955px;box-sizing:border-box;border:2px solid #4e5665;border-radius:20px;background:#06060b"></div>
<svg class="a" style="left:0;top:0" width="2784" height="1720"><circle cx="1653.1" cy="1239.0500000000002" r="9.4" fill="#585f6d"/><rect x="1649.1" y="1235.0500000000002" width="8" height="8" fill="#06060b"/></svg>
<div class="t" id="t12" style="left:1671.31px;top:1230.00px;font-size:15.60px;font-weight:400;color:#656c79;transform:scaleX(1.1903);">Stop</div>
<div class="a" style="left:851px;top:365px;width:95px;height:95px;background:#361f7e"></div>
<div class="a" style="left:863px;top:377px;width:71px;height:71px;background:#6740e8"></div>
<svg class="a" style="left:0;top:0" width="2784" height="1720"><path d="M876 387.3L920.5 412.5L876 438.7Z" fill="#07060c"/></svg>
<div class="a" style="left:1772.6px;top:1428.8px;width:95px;height:95px;background:#361f7e"></div>
<div class="a" style="left:1784.6px;top:1440.8px;width:71px;height:71px;background:#6740e8"></div>
<div class="a" style="left:1800.0px;top:1456.8px;width:40.3px;height:40px;background:#07060c"></div>
<div class="a" style="left:1773px;top:344px;width:449px;height:46.5px;box-sizing:border-box;background:#06060b;border:2px solid #1d418c;border-bottom:none;border-radius:12px 12px 0 0"></div>
<svg class="a" style="left:0;top:0" width="2784" height="1720"><circle cx="1962.4" cy="366.45" r="11.3" fill="#4a9250"/><path d="M1958.8000000000002 360.84999999999997L1967.9 366.45L1958.8000000000002 372.05Z" fill="#06060b"/></svg>
<div class="t" id="t13" style="left:1982.86px;top:357.00px;font-size:18.20px;font-weight:700;color:#aeaebe;transform:scaleX(1.0368);">loaded</div>
<div class="a" style="left:1773.00px;top:390.00px;width:449.00px;height:991.50px;background:#14357a;"></div>
<div class="a" style="left:1773.00px;top:435.00px;width:449.00px;height:2.00px;background:#0f2552;"></div>
<div class="a" style="left:1773.00px;top:530.00px;width:449.00px;height:2.00px;background:#0f2552;"></div>
<div class="a" style="left:1773.00px;top:577.00px;width:449.00px;height:2.00px;background:#0f2552;"></div>
<div class="t" id="t14" style="left:1795.99px;top:401.00px;font-size:18.99px;font-weight:700;color:#fff;transform:scaleX(1.0088);">Hardware Interface</div>
<svg class="a" style="left:0;top:0" width="2784" height="1720"><circle cx="1985.3" cy="411.7" r="6.5" fill="none" stroke="#a6a8b8" stroke-width="1.3"/><circle cx="1985.3" cy="409.09999999999997" r="0.95" fill="#a6a8b8"/><path d="M1983.8 411.4H1985.8V414.9M1983.5 414.8H1987.2" stroke="#a6a8b8" stroke-width="1.2" fill="none"/></svg>
<div class="a" style="left:1796.2px;top:458.4px;width:45.7px;height:15.3px;background:#a9a9b9;border-radius:8px"></div>
<div class="t" id="t15" style="left:1802.00px;top:461.00px;font-size:10.87px;font-weight:900;color:#14357a;transform:scaleX(1.1800);">URDF</div>
<div class="t" id="t16" style="left:1851.70px;top:459.00px;font-size:16.52px;font-weight:700;color:#fff;transform:scaleX(0.9986);">Generic six-axis robot arm</div>
<div class="a" style="left:1796.2px;top:492.9px;width:43.8px;height:15.1px;background:#a9a9b9;border-radius:8px"></div>
<div class="t" id="t17" style="left:1802.00px;top:496.00px;font-size:10.87px;font-weight:900;color:#14357a;transform:scaleX(1.1552);">RATE</div>
<div class="t" id="t18" style="left:1849.90px;top:493.00px;font-size:16.52px;font-weight:700;color:#fff;transform:scaleX(1.0256);">60 Hz</div>
<div class="t" id="t19" style="left:1797.00px;top:546.00px;font-size:16.96px;font-weight:700;color:#dcdde6;transform:scaleX(0.9756);">Transitions</div>
<div class="t" id="t20" style="left:1797.00px;top:593.00px;font-size:16.96px;font-weight:700;color:#dcdde6;transform:scaleX(0.9867);">Controllers</div>
<div class="a" style="left:1773.00px;top:625.30px;width:439.00px;height:437.30px;background:#0b2454;"></div>
<div class="a" style="left:1773.00px;top:1074.40px;width:439.00px;height:295.50px;background:#0b2454;"></div>
<div class="t" id="t21" style="left:1796.10px;top:638.00px;font-size:18.99px;font-weight:700;color:#fff;transform:scaleX(0.8972);">Robot State Broad...</div>
<svg class="a" style="left:0;top:0" width="2784" height="1720"><circle cx="1978" cy="648.2" r="6.5" fill="none" stroke="#a6a8b8" stroke-width="1.3"/><circle cx="1978" cy="645.6" r="0.95" fill="#a6a8b8"/><path d="M1976.5 647.9000000000001H1978.5V651.4000000000001M1976.2 651.3000000000001H1979.9" stroke="#a6a8b8" stroke-width="1.2" fill="none"/></svg>
<div class="a" style="left:2044.5px;top:634.1px;width:153.80000000000018px;height:30.600000000000023px;background:#4a8e4f;border-radius:16px"></div>
<svg class="a" style="left:0;top:0" width="2784" height="1720"><path d="M2055.8 642.2L2069.6 649.4000000000001L2055.8 656.6000000000001Z" fill="#fff"/></svg>
<div class="t" id="t22" style="left:2076.80px;top:640.00px;font-size:18.50px;font-weight:400;color:#fff;transform:scaleX(1.0208);-webkit-text-stroke:0.55px #fff;">active</div>
<div class="a" style="left:1796.6px;top:681.5px;width:153.20000000000005px;height:30.200000000000045px;box-sizing:border-box;background:#143a86;border:1.5px solid #163d8c;border-radius:16px"></div>
<svg class="a" style="left:0;top:0" width="2784" height="1720"><circle cx="1833.6999999999998" cy="696.6" r="7.1" fill="#8e97ad"/><path d="M1831.2999999999997 692.8000000000001L1837.4999999999998 696.6L1831.2999999999997 700.4Z" fill="#143a86"/></svg>
<div class="t" id="t23" style="left:1846.40px;top:687.00px;font-size:16.40px;font-weight:400;color:#8e97ad;transform:scaleX(1.0603);-webkit-text-stroke:0.55px #8e97ad;">auto-load</div>
<div class="a" style="left:1960px;top:681.5px;width:153px;height:30.200000000000045px;box-sizing:border-box;background:#143a86;border:1.5px solid #163d8c;border-radius:16px"></div>
<svg class="a" style="left:0;top:0" width="2784" height="1720"><path d="M1976.7 690.7L1987.3 696.6L1976.7 702.5Z" fill="#8e97ad"/></svg>
<div class="t" id="t24" style="left:1992.60px;top:687.00px;font-size:16.40px;font-weight:400;color:#8e97ad;transform:scaleX(1.0915);-webkit-text-stroke:0.55px #8e97ad;">auto-activate</div>
<div class="a" style="left:1781.70px;top:719.80px;width:430.30px;height:1.00px;background:#081d46;"></div>
<div class="t" id="t25" style="left:1797.00px;top:735.00px;font-size:16.96px;font-weight:700;color:#dcdde6;transform:scaleX(0.9756);">Transitions</div>
<div class="t" id="t26" style="left:1797.00px;top:782.00px;font-size:15.65px;font-weight:400;color:#bcbeca;transform:scaleX(1.0588);">On Activate</div>
<svg class="a" style="left:0;top:0" width="2784" height="1720"><circle cx="1898" cy="789.7" r="6.5" fill="none" stroke="#a6a8b8" stroke-width="1.3"/><circle cx="1898" cy="787.1" r="0.95" fill="#a6a8b8"/><path d="M1896.5 789.4000000000001H1898.5V792.9000000000001M1896.2 792.8000000000001H1899.9" stroke="#a6a8b8" stroke-width="1.2" fill="none"/></svg>
<div class="a" style="left:1781.70px;top:813.30px;width:430.30px;height:1.00px;background:#081d46;"></div>
<div class="t" id="t27" style="left:1795.97px;top:830.00px;font-size:16.96px;font-weight:700;color:#dcdde6;transform:scaleX(1.0262);">Predicates</div>
<div class="t" id="t28" style="left:2145.69px;top:830.00px;font-size:14.93px;font-weight:400;color:#e6e6ee;transform:scaleX(0.9125);">Show All</div>
<div class="t" id="t29" style="left:1797.00px;top:877.00px;font-size:16.96px;font-weight:700;color:#dcdde6;transform:scaleX(0.9600);">Signals</div>
<div class="t" id="t30" style="left:1797.00px;top:924.00px;font-size:15.65px;font-weight:400;color:#bcbeca;transform:scaleX(1.0577);">Joint state</div>
<svg class="a" style="left:0;top:0" width="2784" height="1720"><circle cx="1888.5" cy="931.6" r="6.5" fill="none" stroke="#a6a8b8" stroke-width="1.3"/><circle cx="1888.5" cy="929.0" r="0.95" fill="#a6a8b8"/><path d="M1887.0 931.3000000000001H1889.0V934.8000000000001M1886.7 934.7H1890.4" stroke="#a6a8b8" stroke-width="1.2" fill="none"/></svg>
<div class="t" id="t31" style="left:1797.00px;top:971.00px;font-size:15.65px;font-weight:400;color:#bcbeca;transform:scaleX(1.0467);">Cartesian state</div>
<svg class="a" style="left:0;top:0" width="2784" height="1720"><circle cx="1923.6" cy="978.6" r="6.5" fill="none" stroke="#a6a8b8" stroke-width="1.3"/><circle cx="1923.6" cy="976.0" r="0.95" fill="#a6a8b8"/><path d="M1922.1 978.3000000000001H1924.1V981.8000000000001M1921.8 981.7H1925.5" stroke="#a6a8b8" stroke-width="1.2" fill="none"/></svg>
<div class="t" id="t32" style="left:1796.02px;top:1018.00px;font-size:15.65px;font-weight:400;color:#bcbeca;transform:scaleX(0.9835);">Force torque sensor d...</div>
<svg class="a" style="left:0;top:0" width="2784" height="1720"><circle cx="1984.3" cy="1025.5" r="6.5" fill="none" stroke="#a6a8b8" stroke-width="1.3"/><circle cx="1984.3" cy="1022.9" r="0.95" fill="#a6a8b8"/><path d="M1982.8 1025.2H1984.8V1028.7M1982.5 1028.6H1986.2" stroke="#a6a8b8" stroke-width="1.2" fill="none"/></svg>
<div class="a" style="left:1773.00px;top:1050.90px;width:439.00px;height:1.00px;background:#081d46;"></div>
<div class="t" id="t33" style="left:1796.11px;top:1087.00px;font-size:18.99px;font-weight:700;color:#fff;transform:scaleX(0.8929);">IK Velocity Control...</div>
<svg class="a" style="left:0;top:0" width="2784" height="1720"><circle cx="1978" cy="1097.5" r="6.5" fill="none" stroke="#a6a8b8" stroke-width="1.3"/><circle cx="1978" cy="1094.9" r="0.95" fill="#a6a8b8"/><path d="M1976.5 1097.2H1978.5V1100.7M1976.2 1100.6H1979.9" stroke="#a6a8b8" stroke-width="1.2" fill="none"/></svg>
<div class="a" style="left:2044.5px;top:1083px;width:153.80000000000018px;height:30.59999999999991px;background:#4a8e4f;border-radius:16px"></div>
<svg class="a" style="left:0;top:0" width="2784" height="1720"><path d="M2055.8 1091.1L2069.6 1098.3L2055.8 1105.5Z" fill="#fff"/></svg>
<div class="t" id="t34" style="left:2076.80px;top:1089.00px;font-size:18.50px;font-weight:400;color:#fff;transform:scaleX(1.0208);-webkit-text-stroke:0.55px #fff;">active</div>
<div class="a" style="left:1796.6px;top:1130.6px;width:153.20000000000005px;height:30.0px;box-sizing:border-box;background:#143a86;border:1.5px solid #163d8c;border-radius:16px"></div>
<svg class="a" style="left:0;top:0" width="2784" height="1720"><circle cx="1833.6999999999998" cy="1145.6" r="7.1" fill="#8e97ad"/><path d="M1831.2999999999997 1141.8L1837.4999999999998 1145.6L1831.2999999999997 1149.3999999999999Z" fill="#143a86"/></svg>
<div class="t" id="t35" style="left:1846.40px;top:1136.00px;font-size:16.40px;font-weight:400;color:#8e97ad;transform:scaleX(1.0603);-webkit-text-stroke:0.55px #8e97ad;">auto-load</div>
<div class="a" style="left:1960px;top:1130.6px;width:153px;height:30.0px;box-sizing:border-box;background:transparent;border:1.5px solid #173b80;border-radius:16px"></div>
<svg class="a" style="left:0;top:0" width="2784" height="1720"><path d="M1976.7 1139.6999999999998L1987.3 1145.6L1976.7 1151.5Z" fill="#55648c"/></svg>
<div class="t" id="t36" style="left:1992.60px;top:1136.00px;font-size:16.40px;font-weight:400;color:#55648c;transform:scaleX(1.0915);-webkit-text-stroke:0.55px #55648c;">auto-activate</div>
<div class="a" style="left:1781.70px;top:1168.30px;width:430.30px;height:1.00px;background:#081d46;"></div>
<div class="t" id="t37" style="left:1797.00px;top:1184.00px;font-size:16.96px;font-weight:700;color:#dcdde6;transform:scaleX(0.9756);">Transitions</div>
<div class="t" id="t38" style="left:1796.50px;top:1231.00px;font-size:15.65px;font-weight:400;color:#bcbeca;transform:scaleX(0.9517);">On Error</div>
<svg class="a" style="left:0;top:0" width="2784" height="1720"><circle cx="1870.8" cy="1238.5" r="6.5" fill="none" stroke="#a6a8b8" stroke-width="1.3"/><circle cx="1870.8" cy="1235.9" r="0.95" fill="#a6a8b8"/><path d="M1869.3 1238.2H1871.3V1241.7M1869.0 1241.6H1872.7" stroke="#a6a8b8" stroke-width="1.2" fill="none"/></svg>
<div class="a" style="left:1781.70px;top:1263.10px;width:430.30px;height:1.00px;background:#081d46;"></div>
<div class="t" id="t39" style="left:1797.00px;top:1279.00px;font-size:16.96px;font-weight:700;color:#dcdde6;transform:scaleX(0.9600);">Signals</div>
<div class="t" id="t40" style="left:1796.50px;top:1325.00px;font-size:15.65px;font-weight:400;color:#bcbeca;transform:scaleX(1.0694);">Command</div>
<svg class="a" style="left:0;top:0" width="2784" height="1720"><circle cx="1891" cy="1333" r="6.5" fill="none" stroke="#a6a8b8" stroke-width="1.3"/><circle cx="1891" cy="1330.4" r="0.95" fill="#a6a8b8"/><path d="M1889.5 1332.7H1891.5V1336.2M1889.2 1336.1H1892.9" stroke="#a6a8b8" stroke-width="1.2" fill="none"/></svg>
<div class="a" style="left:1773.00px;top:1357.90px;width:439.00px;height:1.00px;background:#081d46;"></div>
<div class="a" style="left:520px;top:1029.4px;width:449px;height:46.59999999999991px;box-sizing:border-box;background:#06060b;border:2px solid #2a2c36;border-bottom:none;border-radius:12px 12px 0 0"></div>
<svg class="a" style="left:0;top:0" width="2784" height="1720"><path d="M704.2 1042.3L721.0 1051.7L704.2 1061.1000000000001Z" fill="#489650"/></svg>
<div class="t" id="t41" style="left:730.80px;top:1043.00px;font-size:18.20px;font-weight:700;color:#aeaebe;transform:scaleX(1.0627);">active</div>
<div class="a" style="left:520.00px;top:1075.80px;width:449.00px;height:185.70px;background:#282a36;"></div>
<div class="a" style="left:520.00px;top:1261.50px;width:449.00px;height:95.80px;background:#1c1e26;"></div>
<div class="t" id="t42" style="left:543.54px;top:1086.00px;font-size:18.99px;font-weight:700;color:#fff;transform:scaleX(0.9589);">Frame to Signal</div>
<svg class="a" style="left:0;top:0" width="2784" height="1720"><circle cx="697.1" cy="1097.5" r="6.5" fill="none" stroke="#a6a8b8" stroke-width="1.3"/><circle cx="697.1" cy="1094.9" r="0.95" fill="#a6a8b8"/><path d="M695.6 1097.2H697.6V1100.7M695.3000000000001 1100.6H699.0" stroke="#a6a8b8" stroke-width="1.2" fill="none"/></svg>
<div class="a" style="left:520.00px;top:1121.50px;width:449.00px;height:1.00px;background:#23252f;"></div>
<div class="a" style="left:543.9px;top:1122px;width:153.20000000000005px;height:30.59999999999991px;box-sizing:border-box;background:#213b73;border:1.5px solid #26427f;border-radius:16px"></div>
<svg class="a" style="left:0;top:0" width="2784" height="1720"><g fill="#8e909c"><rect x="561.15" y="1130.8" width="3.5" height="3.5" transform="rotate(0 562.9 1137.8)"/><rect x="561.15" y="1130.8" width="3.5" height="3.5" transform="rotate(60 562.9 1137.8)"/><rect x="561.15" y="1130.8" width="3.5" height="3.5" transform="rotate(120 562.9 1137.8)"/><rect x="561.15" y="1130.8" width="3.5" height="3.5" transform="rotate(180 562.9 1137.8)"/><rect x="561.15" y="1130.8" width="3.5" height="3.5" transform="rotate(240 562.9 1137.8)"/><rect x="561.15" y="1130.8" width="3.5" height="3.5" transform="rotate(300 562.9 1137.8)"/><circle cx="562.9" cy="1137.8" r="5.3"/></g><circle cx="562.9" cy="1137.8" r="1.9" fill="#213b73"/></svg>
<div class="t" id="t43" style="left:574.50px;top:1128.00px;font-size:16.40px;font-weight:400;color:#9a9caa;transform:scaleX(1.0571);-webkit-text-stroke:0.55px #9a9caa;">auto-configure</div>
<div class="a" style="left:706.9px;top:1122px;width:153.60000000000002px;height:30.59999999999991px;box-sizing:border-box;background:#213b73;border:1.5px solid #26427f;border-radius:16px"></div>
<svg class="a" style="left:0;top:0" width="2784" height="1720"><path d="M723.6 1131.3999999999999L734.2 1137.3L723.6 1143.2Z" fill="#8e909c"/></svg>
<div class="t" id="t44" style="left:740.00px;top:1128.00px;font-size:16.40px;font-weight:400;color:#9a9caa;transform:scaleX(1.0904);-webkit-text-stroke:0.55px #9a9caa;">auto-activate</div>
<div class="a" style="left:520.00px;top:1167.30px;width:449.00px;height:2.00px;background:#1a1b22;"></div>
<div class="t" id="t45" style="left:544.50px;top:1183.00px;font-size:16.96px;font-weight:700;color:#dcdde6;transform:scaleX(0.9767);">Transitions</div>
<div class="t" id="t46" style="left:544.50px;top:1231.00px;font-size:15.65px;font-weight:400;color:#bcbeca;transform:scaleX(1.0575);">On Activate</div>
<svg class="a" style="left:0;top:0" width="2784" height="1720"><circle cx="645.7" cy="1238.8" r="6.5" fill="none" stroke="#a6a8b8" stroke-width="1.3"/><circle cx="645.7" cy="1236.2" r="0.95" fill="#a6a8b8"/><path d="M644.2 1238.5H646.2V1242.0M643.9000000000001 1241.8999999999999H647.6" stroke="#a6a8b8" stroke-width="1.2" fill="none"/></svg>
<div class="t" id="t47" style="left:544.30px;top:1278.00px;font-size:16.96px;font-weight:700;color:#dcdde6;transform:scaleX(0.9633);">Signals</div>
<div class="t" id="t48" style="left:909.35px;top:1326.00px;font-size:15.65px;font-weight:400;color:#bcbeca;transform:scaleX(0.9529);">Pose</div>
<svg class="a" style="left:0;top:0" width="2784" height="1720"><circle cx="893.8" cy="1333" r="6.5" fill="none" stroke="#a6a8b8" stroke-width="1.3"/><circle cx="893.8" cy="1330.4" r="0.95" fill="#a6a8b8"/><path d="M892.3 1332.7H894.3V1336.2M892.0 1336.1H895.6999999999999" stroke="#a6a8b8" stroke-width="1.2" fill="none"/></svg>
<div class="a" style="left:1135px;top:935.1px;width:449px;height:45.89999999999998px;box-sizing:border-box;background:#06060b;border:2px solid #2a2c36;border-bottom:none;border-radius:12px 12px 0 0"></div>
<svg class="a" style="left:0;top:0" width="2784" height="1720"><path d="M1319 947.65L1335.8 957.05L1319 966.4499999999999Z" fill="#489650"/></svg>
<div class="t" id="t49" style="left:1345.00px;top:948.00px;font-size:18.20px;font-weight:700;color:#aeaebe;transform:scaleX(1.0686);">active</div>
<div class="a" style="left:1135.00px;top:980.50px;width:449.00px;height:234.50px;background:#282a36;"></div>
<div class="a" style="left:1135.00px;top:1215.00px;width:449.00px;height:190.20px;background:#1c1e26;"></div>
<div class="t" id="t50" style="left:1159.00px;top:992.00px;font-size:18.99px;font-weight:700;color:#fff;transform:scaleX(0.9672);">Signal Point Attractor</div>
<svg class="a" style="left:0;top:0" width="2784" height="1720"><circle cx="1365" cy="1002.5" r="6.5" fill="none" stroke="#a6a8b8" stroke-width="1.3"/><circle cx="1365" cy="999.9" r="0.95" fill="#a6a8b8"/><path d="M1363.5 1002.2H1365.5V1005.7M1363.2 1005.6H1366.9" stroke="#a6a8b8" stroke-width="1.2" fill="none"/></svg>
<div class="a" style="left:1135.00px;top:1026.60px;width:449.00px;height:1.00px;background:#23252f;"></div>
<div class="a" style="left:1158px;top:1027.9px;width:153.9000000000001px;height:29.799999999999955px;box-sizing:border-box;background:#213b73;border:1.5px solid #26427f;border-radius:16px"></div>
<svg class="a" style="left:0;top:0" width="2784" height="1720"><g fill="#8e909c"><rect x="1175.25" y="1036.3000000000002" width="3.5" height="3.5" transform="rotate(0 1177 1043.3000000000002)"/><rect x="1175.25" y="1036.3000000000002" width="3.5" height="3.5" transform="rotate(60 1177 1043.3000000000002)"/><rect x="1175.25" y="1036.3000000000002" width="3.5" height="3.5" transform="rotate(120 1177 1043.3000000000002)"/><rect x="1175.25" y="1036.3000000000002" width="3.5" height="3.5" transform="rotate(180 1177 1043.3000000000002)"/><rect x="1175.25" y="1036.3000000000002" width="3.5" height="3.5" transform="rotate(240 1177 1043.3000000000002)"/><rect x="1175.25" y="1036.3000000000002" width="3.5" height="3.5" transform="rotate(300 1177 1043.3000000000002)"/><circle cx="1177" cy="1043.3000000000002" r="5.3"/></g><circle cx="1177" cy="1043.3000000000002" r="1.9" fill="#213b73"/></svg>
<div class="t" id="t51" style="left:1189.30px;top:1033.00px;font-size:16.40px;font-weight:400;color:#9a9caa;transform:scaleX(1.0552);-webkit-text-stroke:0.55px #9a9caa;">auto-configure</div>
<div class="a" style="left:1321.5px;top:1027.9px;width:153.20000000000005px;height:29.799999999999955px;box-sizing:border-box;background:#213b73;border:1.5px solid #26427f;border-radius:16px"></div>
<svg class="a" style="left:0;top:0" width="2784" height="1720"><path d="M1338.2 1036.9L1348.8 1042.8000000000002L1338.2 1048.7000000000003Z" fill="#8e909c"/></svg>
<div class="t" id="t52" style="left:1354.90px;top:1033.00px;font-size:16.40px;font-weight:400;color:#9a9caa;transform:scaleX(1.1064);-webkit-text-stroke:0.55px #9a9caa;">auto-activate</div>
<div class="a" style="left:1135.00px;top:1072.60px;width:449.00px;height:2.00px;background:#1a1b22;"></div>
<div class="t" id="t53" style="left:1158.50px;top:1089.00px;font-size:16.96px;font-weight:700;color:#dcdde6;transform:scaleX(0.9811);">Transitions</div>
<div class="t" id="t54" style="left:1158.50px;top:1137.00px;font-size:15.65px;font-weight:400;color:#bcbeca;transform:scaleX(1.0600);">On Activate</div>
<svg class="a" style="left:0;top:0" width="2784" height="1720"><circle cx="1259.8" cy="1144.2" r="6.5" fill="none" stroke="#a6a8b8" stroke-width="1.3"/><circle cx="1259.8" cy="1141.6000000000001" r="0.95" fill="#a6a8b8"/><path d="M1258.3 1143.9H1260.3V1147.4M1258.0 1147.3H1261.7" stroke="#a6a8b8" stroke-width="1.2" fill="none"/></svg>
<div class="a" style="left:1135.00px;top:1167.00px;width:449.00px;height:2.00px;background:#1a1b22;"></div>
<div class="t" id="t55" style="left:1157.67px;top:1184.00px;font-size:16.96px;font-weight:700;color:#dcdde6;transform:scaleX(1.0274);">Predicates</div>
<div class="t" id="t56" style="left:1507.28px;top:1185.00px;font-size:14.93px;font-weight:400;color:#e6e6ee;transform:scaleX(0.9250);">Show All</div>
<div class="t" id="t57" style="left:1159.00px;top:1231.00px;font-size:16.96px;font-weight:700;color:#dcdde6;transform:scaleX(0.9567);">Signals</div>
<div class="t" id="t58" style="left:1157.98px;top:1278.00px;font-size:15.65px;font-weight:400;color:#bcbeca;transform:scaleX(1.0236);">Input pose</div>
<svg class="a" style="left:0;top:0" width="2784" height="1720"><circle cx="1249" cy="1285.9" r="6.5" fill="none" stroke="#a6a8b8" stroke-width="1.3"/><circle cx="1249" cy="1283.3000000000002" r="0.95" fill="#a6a8b8"/><path d="M1247.5 1285.6000000000001H1249.5V1289.1000000000001M1247.2 1289.0H1250.9" stroke="#a6a8b8" stroke-width="1.2" fill="none"/></svg>
<div class="t" id="t59" style="left:1467.20px;top:1278.00px;font-size:15.65px;font-weight:400;color:#bcbeca;transform:scaleX(1.0771);">Output twist</div>
<svg class="a" style="left:0;top:0" width="2784" height="1720"><circle cx="1450" cy="1285.9" r="6.5" fill="none" stroke="#a6a8b8" stroke-width="1.3"/><circle cx="1450" cy="1283.3000000000002" r="0.95" fill="#a6a8b8"/><path d="M1448.5 1285.6000000000001H1450.5V1289.1000000000001M1448.2 1289.0H1451.9" stroke="#a6a8b8" stroke-width="1.2" fill="none"/></svg>
<div class="t" id="t60" style="left:1159.00px;top:1324.00px;font-size:15.65px;font-weight:400;color:#bcbeca;transform:scaleX(1.0670);">Attractor pose</div>
<svg class="a" style="left:0;top:0" width="2784" height="1720"><circle cx="1278.7" cy="1332.2" r="6.5" fill="none" stroke="#a6a8b8" stroke-width="1.3"/><circle cx="1278.7" cy="1329.6000000000001" r="0.95" fill="#a6a8b8"/><path d="M1277.2 1331.9H1279.2V1335.4M1276.9 1335.3H1280.6000000000001" stroke="#a6a8b8" stroke-width="1.2" fill="none"/></svg>
<div class="t" id="t61" style="left:1157.97px;top:1372.00px;font-size:15.65px;font-weight:400;color:#bcbeca;transform:scaleX(1.0291);">Base frame</div>
<svg class="a" style="left:0;top:0" width="2784" height="1720"><circle cx="1257.8" cy="1379.8" r="6.5" fill="none" stroke="#a6a8b8" stroke-width="1.3"/><circle cx="1257.8" cy="1377.2" r="0.95" fill="#a6a8b8"/><path d="M1256.3 1379.5H1258.3V1383.0M1256.0 1382.8999999999999H1259.7" stroke="#a6a8b8" stroke-width="1.2" fill="none"/></svg>
<svg class="a" style="left:0;top:0" width="2784" height="1720"><path d="M946.2 401.5L957.4000000000001 412.7L946.2 423.9Z" fill="#fff"/><path d="M946.2 405.09999999999997L953.8000000000001 412.7L946.2 420.3L938.6 412.7Z" fill="#6741ea"/></svg>
<svg class="a" style="left:0;top:0" width="2784" height="1720"><path d="M1773 401.3L1784.2 412.5L1773 423.7Z" fill="#fff"/><path d="M1773 404.9L1780.6 412.5L1773 420.1L1765.4 412.5Z" fill="#6741ea"/></svg>
<svg class="a" style="left:0;top:0" width="2784" height="1720"><path d="M2222 401.3L2233.2 412.5L2222 423.7Z" fill="#fff"/><path d="M2222 404.9L2229.6 412.5L2222 420.1L2214.4 412.5Z" fill="#6741ea"/></svg>
<svg class="a" style="left:0;top:0" width="2784" height="1720"><path d="M1773 637.0L1784.2 648.2L1773 659.4000000000001Z" fill="#fff"/><path d="M1773 640.6L1780.6 648.2L1773 655.8000000000001L1765.4 648.2Z" fill="#6741ea"/></svg>
<svg class="a" style="left:0;top:0" width="2784" height="1720"><path d="M2222 637.0L2233.2 648.2L2222 659.4000000000001Z" fill="#fff"/><path d="M2222 640.6L2229.6 648.2L2222 655.8000000000001L2214.4 648.2Z" fill="#6741ea"/></svg>
<svg class="a" style="left:0;top:0" width="2784" height="1720"><path d="M1773 780.0L1761.8 791.2L1773 802.4000000000001Z" fill="#fff"/><path d="M1773 783.6L1780.6 791.2L1773 798.8000000000001L1765.4 791.2Z" fill="#6741ea"/></svg>
<svg class="a" style="left:0;top:0" width="2784" height="1720"><path d="M1773 1086.6L1784.2 1097.8L1773 1109.0Z" fill="#fff"/><path d="M1773 1090.2L1780.6 1097.8L1773 1105.3999999999999L1765.4 1097.8Z" fill="#6741ea"/></svg>
<svg class="a" style="left:0;top:0" width="2784" height="1720"><path d="M2222 1086.6L2233.2 1097.8L2222 1109.0Z" fill="#fff"/><path d="M2222 1090.2L2229.6 1097.8L2222 1105.3999999999999L2214.4 1097.8Z" fill="#6741ea"/></svg>
<svg class="a" style="left:0;top:0" width="2784" height="1720"><path d="M1773 1228.3L1761.8 1239.5L1773 1250.7Z" fill="#fff"/><path d="M1773 1231.9L1780.6 1239.5L1773 1247.1L1765.4 1239.5Z" fill="#6741ea"/></svg>
<svg class="a" style="left:0;top:0" width="2784" height="1720"><path d="M1772.6 1465.0L1783.8 1476.2L1772.6 1487.4Z" fill="#fff"/><path d="M1772.6 1468.6000000000001L1780.1999999999998 1476.2L1772.6 1483.8L1765.0 1476.2Z" fill="#6741ea"/></svg>
<svg class="a" style="left:0;top:0" width="2784" height="1720"><path d="M520.2 1087.1L531.4000000000001 1098.3L520.2 1109.5Z" fill="#fff"/><path d="M520.2 1090.7L527.8000000000001 1098.3L520.2 1105.8999999999999L512.6 1098.3Z" fill="#6741ea"/></svg>
<svg class="a" style="left:0;top:0" width="2784" height="1720"><path d="M969 1087.1L980.2 1098.3L969 1109.5Z" fill="#fff"/><path d="M969 1090.7L976.6 1098.3L969 1105.8999999999999L961.4 1098.3Z" fill="#6741ea"/></svg>
<svg class="a" style="left:0;top:0" width="2784" height="1720"><path d="M969 1228.1L980.2 1239.3L969 1250.5Z" fill="#fff"/><path d="M969 1231.7L976.6 1239.3L969 1246.8999999999999L961.4 1239.3Z" fill="#6741ea"/></svg>
<svg class="a" style="left:0;top:0" width="2784" height="1720"><path d="M1135 992.0L1146.2 1003.2L1135 1014.4000000000001Z" fill="#fff"/><path d="M1135 995.6L1142.6 1003.2L1135 1010.8000000000001L1127.4 1003.2Z" fill="#6741ea"/></svg>
<svg class="a" style="left:0;top:0" width="2784" height="1720"><path d="M1584 992.0L1595.2 1003.2L1584 1014.4000000000001Z" fill="#fff"/><path d="M1584 995.6L1591.6 1003.2L1584 1010.8000000000001L1576.4 1003.2Z" fill="#6741ea"/></svg>
<svg class="a" style="left:0;top:0" width="2784" height="1720"><path d="M1584 1133.6L1595.2 1144.8L1584 1156.0Z" fill="#fff"/><path d="M1584 1137.2L1591.6 1144.8L1584 1152.3999999999999L1576.4 1144.8Z" fill="#6741ea"/></svg>
<svg class="a" style="left:0;top:0" width="2784" height="1720"><path d="M1773 922.1A10.8 10.8 0 0 0 1773 943.6999999999999Z" fill="#fff"/><circle cx="1773" cy="932.9" r="8.3" fill="#2c6ce6"/></svg>
<svg class="a" style="left:0;top:0" width="2784" height="1720"><path d="M1773 969.3000000000001A10.8 10.8 0 0 0 1773 990.9Z" fill="#fff"/><circle cx="1773" cy="980.1" r="8.3" fill="#2c6ce6"/></svg>
<svg class="a" style="left:0;top:0" width="2784" height="1720"><path d="M1773 1016.0A10.8 10.8 0 0 0 1773 1037.6Z" fill="#fff"/><circle cx="1773" cy="1026.8" r="8.3" fill="#2c6ce6"/></svg>
<svg class="a" style="left:0;top:0" width="2784" height="1720"><path d="M1773 1322.8A10.8 10.8 0 0 1 1773 1344.3999999999999Z" fill="#fff"/><circle cx="1773" cy="1333.6" r="8.3" fill="#2c6ce6"/></svg>
<svg class="a" style="left:0;top:0" width="2784" height="1720"><path d="M969 1323.9A10.8 10.8 0 0 1 969 1345.5Z" fill="#fff"/><circle cx="969" cy="1334.7" r="8.3" fill="#2c6ce6"/></svg>
<svg class="a" style="left:0;top:0" width="2784" height="1720"><path d="M1135 1276.0A10.8 10.8 0 0 1 1135 1297.6Z" fill="#fff"/><circle cx="1135" cy="1286.8" r="8.3" fill="#2c6ce6"/></svg>
<svg class="a" style="left:0;top:0" width="2784" height="1720"><path d="M1135 1322.6000000000001A10.8 10.8 0 0 1 1135 1344.2Z" fill="#fff"/><circle cx="1135" cy="1333.4" r="8.3" fill="#2c6ce6"/></svg>
<svg class="a" style="left:0;top:0" width="2784" height="1720"><path d="M1135 1370.2A10.8 10.8 0 0 1 1135 1391.8Z" fill="#fff"/><circle cx="1135" cy="1381" r="8.3" fill="#2c6ce6"/></svg>
<svg class="a" style="left:0;top:0" width="2784" height="1720"><path d="M1584 1276.0A10.8 10.8 0 0 1 1584 1297.6Z" fill="#fff"/><circle cx="1584" cy="1286.8" r="8.3" fill="#2c6ce6"/></svg>
<div class="a" style="left:136px;top:252px;width:540px;height:86px;background:#1c1e25;border-radius:15px"></div>
<svg class="a" style="left:0;top:0" width="2784" height="1720"><path d="M156.4 288.1L170.1 301.7M170.1 288.1L156.4 301.7" stroke="#fff" stroke-width="3.6" stroke-linecap="square"/></svg>
<div class="t" id="t62" style="left:254.80px;top:276.00px;font-size:31.30px;font-weight:700;color:#fff;transform:scaleX(1.0021);">Motion example</div>
<svg class="a" style="left:0;top:0" width="2784" height="1720"><path fill="#fff" fill-rule="evenodd" d="M622 281.8h30.1v26.2h-30.1Z M625.3 285.2v19.5h13.4v-19.5Z M643.1 286.2v2.6h4.7v-2.6Z M643.1 291.7v2.4h4.7v-2.4Z M643.1 297.3v2.4h4.7v-2.4Z"/></svg>
<div class="a" style="left:692px;top:252.4px;width:272px;height:83.5px;box-sizing:border-box;background:#1c1e25;border:2px solid #5d5d69;border-radius:16px"></div>
<svg class="a" style="left:0;top:0" width="2784" height="1720"><rect x="779.1" y="282.5" width="16.9" height="16.9" fill="none" stroke="#fff" stroke-width="3"/></svg>
<div class="t" id="t63" style="left:812.70px;top:277.00px;font-size:29.86px;font-weight:700;color:#fff;transform:scaleX(0.9984);">Stop</div>
<div class="a" style="left:1728px;top:252px;width:920px;height:86px;background:#1c1e25;border-radius:15px"></div>
<svg class="a" style="left:0;top:0" width="2784" height="1720"><path fill="#fff" fill-rule="evenodd" d="M1752 281h30.1v26.2h-30.1Z M1755.3 284.4v19.5h13.4v-19.5Z M1773.1 285.4v2.6h4.7v-2.6Z M1773.1 290.9v2.4h4.7v-2.4Z M1773.1 296.5v2.4h4.7v-2.4Z"/></svg>
<div class="t" id="t64" style="left:1825.78px;top:278.00px;font-size:26.67px;font-weight:400;color:#9f9eb0;transform:scaleX(1.0162);-webkit-text-stroke:0.55px #9f9eb0;">Scene</div>
<div class="t" id="t65" style="left:1954.94px;top:278.00px;font-size:26.67px;font-weight:400;color:#9f9eb0;transform:scaleX(1.0629);-webkit-text-stroke:0.55px #9f9eb0;">Code</div>
<div class="t" id="t66" style="left:2067.48px;top:278.00px;font-size:26.67px;font-weight:400;color:#9f9eb0;transform:scaleX(1.0202);-webkit-text-stroke:0.55px #9f9eb0;">3D view</div>
<div class="t" id="t67" style="left:2196.73px;top:278.00px;font-size:26.67px;font-weight:400;color:#9f9eb0;transform:scaleX(1.0360);-webkit-text-stroke:0.55px #9f9eb0;">Live Data</div>
<div class="t" id="t68" style="left:2363.45px;top:278.00px;font-size:26.67px;font-weight:400;color:#9f9eb0;transform:scaleX(1.0273);-webkit-text-stroke:0.55px #9f9eb0;">Logs</div>
<div class="a" style="left:2472px;top:282px;width:18px;height:18px;border-radius:50%;background:#2f6ee8"></div>
<div class="t" id="t69" style="left:2496.95px;top:278.00px;font-size:26.67px;font-weight:400;color:#9f9eb0;transform:scaleX(1.0256);-webkit-text-stroke:0.55px #9f9eb0;">Live Table</div>
<div class="a" style="left:136px;top:1468px;width:540px;height:80px;background:#1c1e25;border-radius:15px"></div>
<svg class="a" style="left:0;top:0" width="2784" height="1720"><rect x="161.5" y="1495.6" width="24.9" height="24.8" fill="none" stroke="#fff" stroke-width="3.2"/><path d="M173.95 1501V1515M166.8 1508H181" stroke="#fff" stroke-width="3.5"/></svg>
<div class="t" id="t70" style="left:282.61px;top:1495.00px;font-size:28.99px;font-weight:700;color:#fff;transform:scaleX(0.9879);">Switch to 3D View</div>
<svg class="a" style="left:0;top:0" width="2784" height="1720"><g fill="none" stroke="#fff" stroke-width="3.9" stroke-linecap="butt"><path d="M640.8 1495.8H650.2V1505.3"/><path d="M650 1496L639.5 1506.5"/><path d="M623.9 1512.6V1522H633.5"/><path d="M624 1522L635 1511"/></g></svg>
<svg class="a" style="left:0;top:0" width="2784" height="1720"><g fill="none" stroke="#8c8c8e" stroke-width="3.2"><path d="M721.9 1504.6A8.3 8.3 0 1 1 721.4 1517.1"/><path d="M820.6 1504.6A8.3 8.3 0 1 0 821.1 1517.1"/></g><path d="M716.7 1502V1509.9H724.6Z" fill="#8c8c8e"/><path d="M825.8 1502V1509.9H817.9Z" fill="#8c8c8e"/></svg>
<div class="a" style="left:112px;top:76px;width:2560px;height:1496px;box-sizing:border-box;border:1px solid #2e2d32;border-top-color:#4a4545;border-radius:19px"></div>
</body></html>
